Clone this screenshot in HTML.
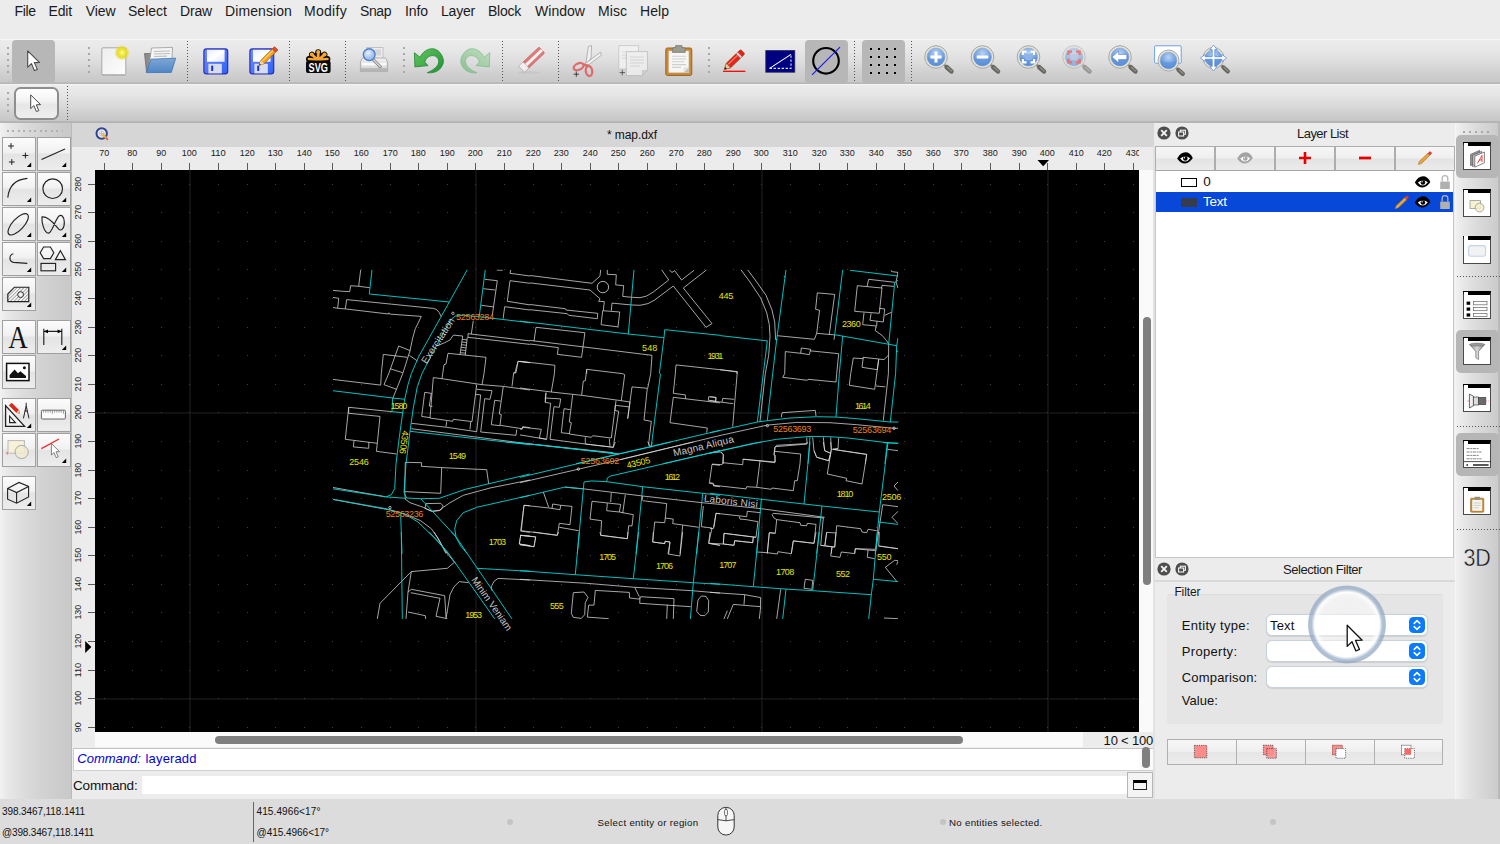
<!DOCTYPE html><html><head><meta charset="utf-8"><title>map.dxf</title><style>html,body{margin:0;padding:0;background:#ececec;}
body{width:1500px;height:844px;overflow:hidden;font-family:"Liberation Sans",sans-serif;}
#app{position:relative;width:1500px;height:844px;overflow:hidden;background:#ececec;}
#app *{box-sizing:border-box;}
.t{position:absolute;white-space:nowrap;}
.a{position:absolute;}
svg{position:absolute;overflow:visible;}
#menubar{position:absolute;left:0;top:0;width:1500px;height:39px;background:#ececec;}
#tb1{position:absolute;left:0;top:39px;width:1500px;height:45px;background:linear-gradient(#ececec 0,#e8e8e8 20%,#dddddd 50%,#d0d0d0 75%,#c8c8c8 95%,#b9b9b9 97%,#b6b6b6);border-top:1px solid #f6f6f6;}
#tb2{position:absolute;left:0;top:84px;width:1500px;height:39px;background:linear-gradient(#ececec 0,#e6e6e6 25%,#d9d9d9 55%,#cccccc 82%,#c7c7c7 94%,#b6b6b6 96%,#b2b2b2);border-top:1px solid #f4f4f4;}
#tbline{display:none}
.sel{position:absolute;background:#b7b7b7;border-radius:4px;}
.hv{position:absolute;width:2px;background:repeating-linear-gradient(#a8a8a8 0 2px,transparent 2px 6px);}
.hh{position:absolute;height:2px;background:repeating-linear-gradient(90deg,#a8a8a8 0 2px,transparent 2px 6px);}
.sv{position:absolute;width:1px;background:repeating-linear-gradient(#555 0 1px,transparent 1px 3px);}
.sh{position:absolute;height:1px;background:repeating-linear-gradient(90deg,#555 0 1px,transparent 1px 3px);}
.lb{position:absolute;width:34px;height:34px;border:1px solid #a0a0a0;background:linear-gradient(#fcfcfc,#f1f1f1 45%,#e4e4e4 52%,#ededed);}
</style></head><body><div id="app">
<div id="menubar"></div>
<span class="t" style="left:14.40px;top:3.00px;font-size:14px;line-height:17px;color:#1a1a1a;letter-spacing:-0.314px;">File</span>
<span class="t" style="left:48.50px;top:3.00px;font-size:14px;line-height:17px;color:#1a1a1a;letter-spacing:-0.131px;">Edit</span>
<span class="t" style="left:85.80px;top:3.00px;font-size:14px;line-height:17px;color:#1a1a1a;letter-spacing:-0.073px;">View</span>
<span class="t" style="left:128.00px;top:3.00px;font-size:14px;line-height:17px;color:#1a1a1a;letter-spacing:0.015px;">Select</span>
<span class="t" style="left:180.00px;top:3.00px;font-size:14px;line-height:17px;color:#1a1a1a;letter-spacing:-0.167px;">Draw</span>
<span class="t" style="left:225.00px;top:3.00px;font-size:14px;line-height:17px;color:#1a1a1a;letter-spacing:0.096px;">Dimension</span>
<span class="t" style="left:304.00px;top:3.00px;font-size:14px;line-height:17px;color:#1a1a1a;letter-spacing:0.295px;">Modify</span>
<span class="t" style="left:360.00px;top:3.00px;font-size:14px;line-height:17px;color:#1a1a1a;letter-spacing:-0.424px;">Snap</span>
<span class="t" style="left:405.00px;top:3.00px;font-size:14px;line-height:17px;color:#1a1a1a;letter-spacing:-0.087px;">Info</span>
<span class="t" style="left:441.00px;top:3.00px;font-size:14px;line-height:17px;color:#1a1a1a;letter-spacing:-0.203px;">Layer</span>
<span class="t" style="left:488.00px;top:3.00px;font-size:14px;line-height:17px;color:#1a1a1a;letter-spacing:-0.247px;">Block</span>
<span class="t" style="left:535.00px;top:3.00px;font-size:14px;line-height:17px;color:#1a1a1a;letter-spacing:0.035px;">Window</span>
<span class="t" style="left:598.00px;top:3.00px;font-size:14px;line-height:17px;color:#1a1a1a;letter-spacing:0.057px;">Misc</span>
<span class="t" style="left:640.00px;top:3.00px;font-size:14px;line-height:17px;color:#1a1a1a;letter-spacing:0.052px;">Help</span>
<div id="tb1"></div><div id="tb2"></div><div id="tbline"></div>
<div class="hv" style="left:7px;top:47px;height:26px"></div>
<div class="sel" style="left:12px;top:40px;width:43px;height:43px"></div>
<svg style="left:27px;top:50px" width="14" height="23" viewBox="0 0 14 23"><path d="M0.7 0.9 L0.7 17.2 L4.5 13.6 L7.4 20.6 L10.3 19.4 L7.4 12.6 L12.4 12.4 Z" fill="#fff" stroke="#4a4a4a" stroke-width="1.1" stroke-linejoin="round"/></svg>
<div class="hv" style="left:88px;top:47px;height:26px"></div>
<!-- new doc -->
<svg style="left:99px;top:44px" width="32" height="36" viewBox="0 0 32 36">
<defs><linearGradient id="gpaper" x1="0" y1="0" x2="1" y2="1"><stop offset="0" stop-color="#ededed"/><stop offset="1" stop-color="#fdfdfd"/></linearGradient>
<radialGradient id="gglow"><stop offset="0" stop-color="#fffde0"/><stop offset="0.22" stop-color="#f6ee4a"/><stop offset="0.62" stop-color="#e6d91c" stop-opacity="0.9"/><stop offset="1" stop-color="#e6d91c" stop-opacity="0"/></radialGradient></defs>
<rect x="2.6" y="29.6" width="24.4" height="2" rx="1" fill="#8a8a8a" opacity="0.6"/>
<rect x="2.8" y="3.8" width="24" height="27" rx="1.2" fill="url(#gpaper)" stroke="#a9a9a9" stroke-width="1"/>
<circle cx="23" cy="8.7" r="7.8" fill="url(#gglow)"/>
</svg>
<!-- open folder -->
<svg style="left:142px;top:44px" width="38" height="34" viewBox="0 0 38 34">
<defs><linearGradient id="gfold" x1="0" y1="0" x2="0" y2="1"><stop offset="0" stop-color="#7fa7d6"/><stop offset="1" stop-color="#4f86c6"/></linearGradient></defs>
<path d="M2.5 9.5 L12 9.5 L13 7.5 L28 7.5 L28 27.5 L4.5 27.5 Z" fill="#8c8c8c" stroke="#6d6d6d" stroke-width="0.8"/>
<path d="M9.5 4 L30.5 3.4 L29.5 24 L6.5 26 Z" fill="#f4f4f4" stroke="#9a9a9a" stroke-width="0.8"/>
<path d="M12 7.5 L28 7 M12 10 L28 9.5 M12 12.5 L25 12.2" stroke="#bdbdbd" stroke-width="1.2"/>
<path d="M9 15.2 L33.7 14.2 L29.3 28.4 L4.2 28.6 Z" fill="url(#gfold)" stroke="#3f73b2" stroke-width="0.8" stroke-linejoin="round"/>
</svg>
<div class="sv" style="left:187px;top:41px;height:40px"></div>
<!-- save -->
<svg style="left:203px;top:47.5px" width="26" height="27" viewBox="0 0 26 27">
<defs><linearGradient id="gsave" x1="0" y1="0" x2="1" y2="1"><stop offset="0" stop-color="#6f8cff"/><stop offset="1" stop-color="#2f62f2"/></linearGradient>
<linearGradient id="glabel" x1="0" y1="0" x2="1" y2="1"><stop offset="0" stop-color="#e8ecff"/><stop offset="0.5" stop-color="#ffffff"/><stop offset="1" stop-color="#dfe6ff"/></linearGradient></defs>
<rect x="0.9" y="0.9" width="23.8" height="25" rx="2.6" fill="url(#gsave)" stroke="#2a2fb5" stroke-width="1.2"/>
<rect x="4" y="1.8" width="17.6" height="12" fill="url(#glabel)"/>
<rect x="5.4" y="15.8" width="13.4" height="9.6" fill="#d9dcec"/>
<rect x="8.2" y="17.6" width="2" height="5.4" fill="#1536c9"/>
</svg>
<svg style="left:249px;top:47.5px" width="26" height="27" viewBox="0 0 26 27">
<rect x="0.9" y="0.9" width="23.8" height="25" rx="2.6" fill="url(#gsave)" stroke="#2a2fb5" stroke-width="1.2"/>
<rect x="4" y="1.8" width="17.6" height="12" fill="url(#glabel)"/>
<rect x="5.4" y="15.8" width="13.4" height="9.6" fill="#d9dcec"/>
<rect x="8.2" y="17.6" width="2" height="5.4" fill="#1536c9"/>
<g transform="translate(10.1,17.4) rotate(-45)"><path d="M0 0 L4.6 -2.3 L24 -2.3 L24 2.3 L4.6 2.3 Z" fill="#f2a31c" stroke="#a8590e" stroke-width="0.7"/><path d="M0 0 L4.6 -2.3 L4.6 2.3Z" fill="#f3d9a8"/><path d="M0 0 L1.8 -0.9 L1.8 0.9Z" fill="#222"/><rect x="20.6" y="-2.3" width="3.6" height="4.6" rx="0.8" fill="#e8433b" stroke="#a8590e" stroke-width="0.5"/><path d="M5.2 -0.7 L20.4 -0.7" stroke="#ffd56e" stroke-width="1.1"/></g>
</svg>
<div class="sv" style="left:289px;top:41px;height:40px"></div>
<!-- SVG icon -->
<svg style="left:305px;top:48px" width="27" height="26" viewBox="0 0 27 26">
<g stroke-linecap="round" fill="none"><g stroke="#0a0a0a" stroke-width="6"><path d="M13.2 12.4 L13.2 4.2 M13.2 12.4 L7 6.6 M13.2 12.4 L19.4 6.6 M13.2 12 L4 11 M13.2 12 L22.4 11"/></g>
<g stroke="#f8a630" stroke-width="2.7"><path d="M13.2 12.4 L13.2 4.2 M13.2 12.4 L7 6.6 M13.2 12.4 L19.4 6.6 M13.2 12 L4 11 M13.2 12 L22.4 11"/></g></g>
<circle cx="13.2" cy="4" r="2" fill="#f8a630"/><circle cx="6.8" cy="6.4" r="2" fill="#f8a630"/><circle cx="19.6" cy="6.4" r="2" fill="#f8a630"/>
<rect x="1" y="12.6" width="24.6" height="12.4" rx="2.6" fill="#0a0a0a"/>
<text x="13.3" y="23.6" text-anchor="middle" font-family="Liberation Sans, sans-serif" font-weight="bold" font-size="12.4" textLength="19.4" lengthAdjust="spacingAndGlyphs" fill="#fff">SVG</text>
</svg>
<div class="sv" style="left:345px;top:41px;height:40px"></div>
<!-- print preview -->
<svg style="left:358px;top:45px" width="32" height="30" viewBox="0 0 32 30">
<defs><linearGradient id="gprn" x1="0" y1="0" x2="0" y2="1"><stop offset="0" stop-color="#f2f2f2"/><stop offset="1" stop-color="#cfcfcf"/></linearGradient>
<radialGradient id="glens1" cx="0.4" cy="0.35"><stop offset="0" stop-color="#e8f0fb"/><stop offset="1" stop-color="#9fc0ea"/></radialGradient></defs>
<rect x="9" y="2.5" width="16" height="12" fill="#ececec" stroke="#b9b9b9" stroke-width="0.8"/>
<rect x="16" y="4.5" width="7" height="6" fill="#d5d5d5"/>
<path d="M4.5 13 L27.5 13 L29.6 17 L29.6 26.6 L2.4 26.6 L2.4 17 Z" fill="url(#gprn)" stroke="#a2a2a2" stroke-width="0.8"/>
<rect x="2.4" y="23.2" width="27.2" height="3.6" fill="#b5b5b5"/>
<rect x="4" y="18" width="24" height="2.4" fill="#fafafa"/>
<path d="M15.5 14.8 L22.2 21.6" stroke="#8d8d8d" stroke-width="3.2" stroke-linecap="round"/>
<path d="M15.5 14.8 L22.2 21.6" stroke="#d6d6d6" stroke-width="1.4" stroke-linecap="round"/>
<circle cx="11.2" cy="9.6" r="5.9" fill="url(#glens1)" stroke="#4f7fd0" stroke-width="1.4"/>
</svg>
<div class="hv" style="left:403px;top:47px;height:26px"></div>
<!-- undo -->
<svg style="left:413px;top:47px" width="32" height="28" viewBox="0 0 32 28">
<defs><linearGradient id="gundo" x1="0" y1="0" x2="1" y2="1"><stop offset="0" stop-color="#66c85e"/><stop offset="1" stop-color="#1f8f38"/></linearGradient>
<path id="undop" d="M1.4 5.7 L1.9 19.9 L15 18.6 L11.7 15 C13 11 15.7 9 19 8.6 C23 8.4 25.7 11 25.7 14.3 C25.7 19 21 23 14.3 25.7 C20 26.4 25 24.5 27.7 21 C30 18 30.8 15 30.3 12.7 C29.5 8 25.5 2 19.5 1.7 C14 1.6 9.5 5.5 7 10.3 Z"/><linearGradient id="gredo" x1="0" y1="0" x2="1" y2="1"><stop offset="0" stop-color="#a9d9a6"/><stop offset="1" stop-color="#5fb36e"/></linearGradient></defs>
<use href="#undop" fill="url(#gundo)" stroke="#1d8534" stroke-width="0.8" stroke-linejoin="round"/>
</svg>
<!-- redo -->
<svg style="left:459.5px;top:47px;opacity:0.62" width="32" height="28" viewBox="0 0 32 28">
<g transform="translate(31.2,0) scale(-1,1)"><use href="#undop" fill="url(#gredo)" stroke="#4fa862" stroke-width="0.8" stroke-linejoin="round"/></g>
</svg>
<div class="sv" style="left:502px;top:41px;height:40px"></div>
<!-- eraser -->
<svg style="left:516px;top:46px;opacity:0.8" width="30" height="30" viewBox="0 0 30 30">
<ellipse cx="13" cy="26.6" rx="11.5" ry="1.3" fill="#bdbdbd" opacity="0.6"/>
<g transform="translate(5.6,23.2) rotate(-43.5)"><rect x="0" y="-4.2" width="28" height="8.4" rx="1.2" fill="#df5f5f" stroke="#b94a4a" stroke-width="0.6"/><rect x="6" y="-1.4" width="22" height="3" fill="#f6f6f6"/><rect x="0" y="-4.2" width="6" height="8.4" rx="1" fill="#f6f6f6" stroke="#b8b8b8" stroke-width="0.6"/></g>
</svg>
<div class="sv" style="left:558px;top:41px;height:40px"></div>
<!-- scissors -->
<svg style="left:571px;top:44px" width="32" height="34" viewBox="0 0 32 34">
<path d="M14.6 22 L17.4 2.4 L20.6 1.6 L20 14 Z" fill="#f1f1f1" stroke="#9a9a9a" stroke-width="0.7"/>
<path d="M12.5 21 L29.6 8.2 L30.4 11.2 L18 20.4 Z" fill="#f1f1f1" stroke="#9a9a9a" stroke-width="0.7"/>
<ellipse cx="7.6" cy="22.6" rx="5.2" ry="3.2" transform="rotate(-24 7.6 22.6)" fill="none" stroke="#dd6d6d" stroke-width="2.3"/>
<ellipse cx="18" cy="27" rx="3.2" ry="5" transform="rotate(-8 18 27)" fill="none" stroke="#dd6d6d" stroke-width="2.3"/>
<path d="M12 20.4 L17.4 22" stroke="#dd6d6d" stroke-width="2.6"/>
<path d="M2.6 30.2 L8 30.2 M5.3 27.5 L5.3 32.9" stroke="#222" stroke-width="0.8"/>
</svg>
<!-- copy -->
<svg style="left:616px;top:43px;opacity:0.8" width="34" height="36" viewBox="0 0 34 36">
<path d="M2.8 2.6 L22.6 2.6 L22.6 26 L2.8 26 Z" fill="#f3f3f3" stroke="#bdbdbd" stroke-width="0.8"/>
<path d="M6 9 L19 9 M6 12 L19 12 M6 15 L19 15" stroke="#d4d4d4" stroke-width="1"/>
<path d="M10.4 8.6 L31.4 8.6 L31.4 27.6 L26.4 32.6 L10.4 32.6 Z" fill="#f1f1f1" stroke="#b4b4b4" stroke-width="0.8"/>
<path d="M26.4 32.6 L26.4 27.6 L31.4 27.6 Z" fill="#cfcfcf" stroke="#b4b4b4" stroke-width="0.6"/>
<path d="M14 14 L28 14 M14 17 L28 17 M14 20 L28 20 M14 23 L24 23" stroke="#d0d0d0" stroke-width="1"/>
<path d="M3.6 29.6 L9 29.6 M6.3 26.9 L6.3 32.3" stroke="#222" stroke-width="0.8"/>
</svg>
<!-- paste -->
<svg style="left:663px;top:43px" width="32" height="35" viewBox="0 0 32 35">
<rect x="2.8" y="5" width="26" height="27.4" rx="1.6" fill="#c98a35" stroke="#9a6422" stroke-width="1"/>
<path d="M5.8 8 L25.8 8 L25.8 29.6 L5.8 29.6 Z" fill="#f6f6f4" stroke="#d7d7d0" stroke-width="0.5"/>
<path d="M20.8 29.6 L25.8 24.6 L25.8 29.6 Z" fill="#bcbcbc"/><path d="M20.8 29.6 L20.8 24.6 L25.8 24.6 Z" fill="#dedede"/>
<path d="M9 13.2 L23 13.2 M9 16 L23 16 M9 18.8 L21 18.8 M9 21.6 L23 21.6 M9 24.4 L18 24.4" stroke="#cfcfcf" stroke-width="1.1"/>
<path d="M9.4 9.4 L9.4 6 Q9.4 4.6 10.8 4.6 L12.6 4.6 L12.6 2.6 L19 2.6 L19 4.6 L20.8 4.6 Q22.2 4.6 22.2 6 L22.2 9.4 Z" fill="#9b9b8f" stroke="#75756b" stroke-width="0.7"/>
</svg>
<div class="hv" style="left:708px;top:47px;height:26px"></div>
<!-- red pencil -->
<svg style="left:721px;top:47px" width="28" height="28" viewBox="0 0 28 28">
<path d="M2 24.3 L24.4 24.3" stroke="#f00" stroke-width="1.3"/>
<g transform="translate(3.4,22.4) rotate(-44)"><path d="M0 0 L5.6 -3.1 L24 -3.1 Q25.6 -3.1 25.6 -1.5 L25.6 1.5 Q25.6 3.1 24 3.1 L5.6 3.1 Z" fill="#e3241b" stroke="#8c3a12" stroke-width="0.7"/><path d="M0 0 L5.6 -3.1 L5.6 3.1Z" fill="#e7c79a" stroke="#8c6a3a" stroke-width="0.5"/><path d="M0 0 L2.2 -1.2 L2.2 1.2Z" fill="#111"/><rect x="19.4" y="-3.1" width="2" height="6.2" fill="#d9d9d9"/><path d="M6.4 -1 L19 -1" stroke="#ff7a66" stroke-width="1.2"/></g>
</svg>
<!-- blue rect -->
<svg style="left:765px;top:50px" width="31" height="23" viewBox="0 0 31 23">
<rect x="0.8" y="0.6" width="29" height="21.6" fill="#000082" stroke="#2a2a4a" stroke-width="0.8"/>
<path d="M4.6 18.4 L26 4.4" stroke="#fff" stroke-width="1.1"/>
<path d="M4.6 18.4 L26 18.4 L26 4.4" stroke="#dfe3ff" stroke-width="1.1" stroke-dasharray="2.4 1.6" fill="none"/>
</svg>
<div class="sel" style="left:805px;top:40px;width:43px;height:43px"></div>
<svg style="left:808px;top:44px" width="36" height="34" viewBox="0 0 36 34">
<circle cx="18" cy="16.8" r="12.8" fill="none" stroke="#000" stroke-width="2.1"/>
<path d="M4 30.8 L32 3.2" stroke="#1414ff" stroke-width="1.1"/>
</svg>
<div class="sv" style="left:854px;top:41px;height:40px"></div>
<div class="sel" style="left:862px;top:40px;width:43px;height:43px"></div>
<svg style="left:868px;top:46px" width="30" height="30" viewBox="0 0 30 30"><g fill="#000">
<rect x="2" y="2" width="2" height="2"/><rect x="10" y="2" width="2" height="2"/><rect x="18" y="2" width="2" height="2"/><rect x="26" y="2" width="2" height="2"/>
<rect x="2" y="10" width="2" height="2"/><rect x="10" y="10" width="2" height="2"/><rect x="18" y="10" width="2" height="2"/><rect x="26" y="10" width="2" height="2"/>
<rect x="2" y="18" width="2" height="2"/><rect x="10" y="18" width="2" height="2"/><rect x="18" y="18" width="2" height="2"/><rect x="26" y="18" width="2" height="2"/>
<rect x="2" y="26" width="2" height="2"/><rect x="10" y="26" width="2" height="2"/><rect x="18" y="26" width="2" height="2"/><rect x="26" y="26" width="2" height="2"/></g></svg>
<div class="sv" style="left:911px;top:41px;height:40px"></div>
<svg style="left:0;top:0" width="1500" height="90" viewBox="0 0 1500 90">
<defs>
<radialGradient id="glens" cx="0.5" cy="0.3" r="0.75"><stop offset="0" stop-color="#b9d3f4"/><stop offset="0.5" stop-color="#7aa6e3"/><stop offset="1" stop-color="#4d83d0"/></radialGradient>
<g id="mag"><path d="M7.6 7.2 L11 10.4" stroke="#8a8a84" stroke-width="2.6"/><path d="M10.8 10.2 L15.4 14.4" stroke="#66665f" stroke-width="4.6" stroke-linecap="round"/><path d="M11.4 10.2 L15.6 14" stroke="#8f8f88" stroke-width="1.4" stroke-linecap="round"/><circle cx="0" cy="0" r="11.3" fill="#e4e4dc" stroke="#a6a69c" stroke-width="1"/><circle cx="0" cy="0" r="9" fill="url(#glens)" stroke="#8fa8c8" stroke-width="0.6"/><path d="M-8.6 0.5 A8.6 8.6 0 0 0 8.6 0.5 Q0 3.4 -8.6 0.5Z" fill="#5b8fd8" opacity="0.55"/></g>
</defs>
<g transform="translate(936,57)"><use href="#mag"/><path d="M-5.6 0 L5.6 0 M0 -5.6 L0 5.6" stroke="#fff" stroke-width="3"/></g>
<g transform="translate(982.5,57)"><use href="#mag"/><path d="M-5.8 0 L5.8 0" stroke="#fff" stroke-width="3"/></g>
<g transform="translate(1028.5,57)"><use href="#mag"/><rect x="-3.2" y="-3" width="6.4" height="6" fill="#8fb4ea"/><path d="M-5.6 -2 L-5.6 -5.4 L-2 -5.4 M2 -5.4 L5.6 -5.4 L5.6 -2 M5.6 2 L5.6 5.4 L2 5.4 M-2 5.4 L-5.6 5.4 L-5.6 2" stroke="#fff" stroke-width="2.2" fill="none"/></g>
<g transform="translate(1074,57)" opacity="0.55"><use href="#mag"/><rect x="-3.2" y="-3" width="6.4" height="6" fill="#9fb8e0"/><path d="M-5.6 -2 L-5.6 -5.4 L-2 -5.4 M2 -5.4 L5.6 -5.4 L5.6 -2 M5.6 2 L5.6 5.4 L2 5.4 M-2 5.4 L-5.6 5.4 L-5.6 2" stroke="#f02020" stroke-width="2.4" fill="none"/></g>
<g transform="translate(1120,57)"><use href="#mag"/><path d="M-8 0 L-1.4 -5.8 L-1.4 -2.6 L6.8 -2.6 L6.8 2.6 L-1.4 2.6 L-1.4 5.8 Z" fill="#fff" stroke="#3f6fb8" stroke-width="0.5"/></g>
<g><rect x="1154.6" y="45.8" width="26.6" height="17.4" rx="1" fill="#fff" stroke="#6f9fe0" stroke-width="1"/><g transform="translate(1168.5,60.5)"><use href="#mag" transform="scale(0.93)"/></g></g>
<g transform="translate(1213.5,58)"><use href="#mag" transform="scale(0.93)"/><path d="M0 -13 L3.6 -8.4 L1.3 -8.4 L1.3 -1.3 L8.4 -1.3 L8.4 -3.6 L13 0 L8.4 3.6 L8.4 1.3 L1.3 1.3 L1.3 8.4 L3.6 8.4 L0 13 L-3.6 8.4 L-1.3 8.4 L-1.3 1.3 L-8.4 1.3 L-8.4 3.6 L-13 0 L-8.4 -3.6 L-8.4 -1.3 L-1.3 -1.3 L-1.3 -8.4 L-3.6 -8.4 Z" fill="#fff" stroke="#4d83d0" stroke-width="0.7"/></g>
</svg>

<div class="hv" style="left:7px;top:92px;height:20px"></div>
<div class="a" style="left:14px;top:87px;width:45px;height:33px;border:2px solid #8e8e8e;border-radius:6.5px;background:linear-gradient(#ffffff,#f3f3f3 40%,#e6e6e6 55%,#efefef)"></div>
<svg style="left:30px;top:94px" width="12" height="20" viewBox="0 0 12 20"><path d="M0.7 0.9 L0.7 14.6 L3.9 11.6 L6.4 17.6 L8.8 16.6 L6.3 10.8 L10.6 10.6 Z" fill="#fff" stroke="#4a4a4a" stroke-width="1" stroke-linejoin="round"/></svg>
<div class="sv" style="left:67px;top:86px;height:35px"></div>

<div class="a" style="left:0;top:123px;width:72px;height:676px;background:linear-gradient(90deg,#f2f2f2 0,#e7e7e7 12%,#dbdbdb 35%,#d2d2d2 60%,#c9c9c9 96%);border-right:1.5px solid #bababa"></div><div class="hh" style="left:7px;top:130px;width:56px;background:repeating-linear-gradient(90deg,#b0b0b0 0 2px,transparent 2px 5.45px)"></div><div class="lb" style="left:1.5px;top:137px"></div><div class="lb" style="left:36.5px;top:137px"></div><div class="lb" style="left:1.5px;top:172px"></div><div class="lb" style="left:36.5px;top:172px"></div><div class="lb" style="left:1.5px;top:207px"></div><div class="lb" style="left:36.5px;top:207px"></div><div class="lb" style="left:1.5px;top:242px"></div><div class="lb" style="left:36.5px;top:242px"></div><div class="lb" style="left:1.5px;top:277px"></div><div class="lb" style="left:1.5px;top:320px"></div><div class="lb" style="left:36.5px;top:320px"></div><div class="lb" style="left:1.5px;top:355px"></div><div class="lb" style="left:1.5px;top:398px"></div><div class="lb" style="left:36.5px;top:398px"></div><div class="lb" style="left:1.5px;top:433px"></div><div class="lb" style="left:36.5px;top:433px"></div><div class="lb" style="left:1.5px;top:476px"></div><svg style="left:0;top:0" width="72" height="520" viewBox="0 0 72 520"><g fill="none" stroke="#222" stroke-width="1.15"><path d="M31.2 162.6 L31.2 167 L26.8 167 Z" fill="#000" stroke="none"/><path d="M66.2 162.6 L66.2 167 L61.8 167 Z" fill="#000" stroke="none"/><path d="M31.2 197.6 L31.2 202 L26.8 202 Z" fill="#000" stroke="none"/><path d="M66.2 197.6 L66.2 202 L61.8 202 Z" fill="#000" stroke="none"/><path d="M31.2 232.6 L31.2 237 L26.8 237 Z" fill="#000" stroke="none"/><path d="M66.2 232.6 L66.2 237 L61.8 237 Z" fill="#000" stroke="none"/><path d="M31.2 267.6 L31.2 272 L26.8 272 Z" fill="#000" stroke="none"/><path d="M66.2 267.6 L66.2 272 L61.8 272 Z" fill="#000" stroke="none"/><path d="M31.2 302.6 L31.2 307 L26.8 307 Z" fill="#000" stroke="none"/><path d="M66.2 345.6 L66.2 350 L61.8 350 Z" fill="#000" stroke="none"/><path d="M31.2 423.6 L31.2 428 L26.8 428 Z" fill="#000" stroke="none"/><path d="M66.2 458.6 L66.2 463 L61.8 463 Z" fill="#000" stroke="none"/><path d="M31.2 501.6 L31.2 506 L26.8 506 Z" fill="#000" stroke="none"/><path d="M8.1 146 L13.9 146 M11 143.1 L11 148.9" stroke-width="1"/><path d="M22.5 155.5 L28.3 155.5 M25.4 152.6 L25.4 158.4" stroke-width="1"/><path d="M8.9 162 L14.7 162 M11.8 159.1 L11.8 164.9" stroke-width="1"/><path d="M41.5 159.6 L65 149"/><path d="M7.8 197.6 Q9.5 180 27.4 178.4"/><circle cx="52.7" cy="188.7" r="9.8"/><ellipse cx="18.2" cy="224.3" rx="13.6" ry="5.6" transform="rotate(-47 18.2 224.3)"/><path d="M42 216.9 C41.5 222 44 233 48.5 233.1 C52 233 54 222 58.9 216.2 C61 214 64 216 64.3 222 C64.6 229 61 231 59 229.4 C56 227 50 216 42 216.9 Z"/><path d="M13.4 253.8 A4.4 4.4 0 0 0 13.4 262.4 L27.3 263.4"/><path d="M40.2 252.8 L43.6 247 L50.4 247 L53.8 252.8 L50.4 258.6 L43.6 258.6 Z"/><path d="M55.4 259.6 L60.4 250.6 L65.4 259.6 Z"/><rect x="41" y="263.4" width="14.6" height="7.4"/><defs><pattern id="hat" width="2.5" height="2.5" patternUnits="userSpaceOnUse" patternTransform="rotate(45)"><rect width="0.6" height="2.5" fill="#777" stroke="none"/></pattern></defs><path d="M7.8 301.6 L7.8 294 L14.4 287.2 L28.8 287.2 L28.8 301.6 Z" fill="#f4f4f4" stroke="none"/><path d="M7.8 301.6 L7.8 294 L14.4 287.2 L28.8 287.2 L28.8 301.6 Z" fill="url(#hat)"/><circle cx="20.6" cy="294.6" r="2.9" fill="#f2f2f2" stroke-width="1"/><path d="M43.8 328.8 L43.8 345 M61.8 328.8 L61.8 345 M43.8 331.4 L61.8 331.4"/><path d="M43.8 331.4 L48 329.6 L48 333.2Z M61.8 331.4 L57.6 329.6 L57.6 333.2Z" fill="#000" stroke="none"/><rect x="6.6" y="363.4" width="22.4" height="17.2" fill="#fff" stroke="#111" stroke-width="1.5"/><path d="M9.6 378 L9.6 375 L14.6 369.6 L18 373.2 L20.4 371.2 L26 376 L26 378 Z" fill="#111" stroke="none"/><circle cx="24.4" cy="367.8" r="1.5" fill="#111" stroke="none"/><path d="M5.6 405.6 L5.6 426.4 L24.6 426.4 Z" fill="#f4f4f4" stroke-width="1.3"/><path d="M9.6 416.2 L9.6 422.6 L15.4 422.6 Z" fill="#fff"/><g transform="translate(19.6,413.4) rotate(-135)"><path d="M0 0 L3 -1.7 L13 -1.7 L13 1.7 L3 1.7 Z" fill="#e3241b" stroke="#8c3a12" stroke-width="0.5"/><path d="M0 0 L3 -1.7 L3 1.7Z" fill="#e7c79a" stroke="none"/></g><path d="M26.2 402.8 L26.2 406 L23.4 418.4 M26.2 406 L29 418.4 M24.6 411 L27.8 411" stroke-width="1"/><rect x="41.4" y="410.2" width="24" height="8.8" rx="1" fill="#fbfbfb" stroke="#555" stroke-width="0.9"/><path d="M43.6 410.6 L43.6 412.6" stroke="#555" stroke-width="0.6"/><path d="M45.8 410.6 L45.8 412.6" stroke="#555" stroke-width="0.6"/><path d="M48 410.6 L48 412.6" stroke="#555" stroke-width="0.6"/><path d="M50.2 410.6 L50.2 412.6" stroke="#555" stroke-width="0.6"/><path d="M52.4 410.6 L52.4 413.8" stroke="#555" stroke-width="0.6"/><path d="M54.6 410.6 L54.6 412.6" stroke="#555" stroke-width="0.6"/><path d="M56.8 410.6 L56.8 412.6" stroke="#555" stroke-width="0.6"/><path d="M59 410.6 L59 412.6" stroke="#555" stroke-width="0.6"/><path d="M61.2 410.6 L61.2 412.6" stroke="#555" stroke-width="0.6"/><path d="M63.4 410.6 L63.4 413.8" stroke="#555" stroke-width="0.6"/><rect x="8" y="440.6" width="16.4" height="12.6" fill="#f6f1d8" stroke="#b9b9b9" stroke-width="1"/><circle cx="21.6" cy="452" r="6.6" fill="#f1ecd0" fill-opacity="0.8" stroke="#a9a9a9" stroke-width="1"/><path d="M6.4 453.2 L8 453.2" stroke="#f08080" stroke-width="2.4"/><path d="M41.4 448.6 L59 439" stroke="#f02a2a" stroke-width="1.3"/><path d="M51.4 443.4 L51.4 455 L54 452.6 L56.2 457.6 L58.2 456.8 L56 451.8 L59.4 451.6 Z" fill="#fff" stroke="#666" stroke-width="0.8"/><path d="M7.6 488.6 L19 482.4 L28.6 486.4 L28.6 497 L16.6 503.2 L7.6 499.2 Z M7.6 488.6 L16.6 492.6 L28.6 486.4 M16.6 492.6 L16.6 503.2" stroke-width="1.1"/></g><text x="18" y="347.6" text-anchor="middle" font-family="Liberation Serif, serif" font-size="30.5" textLength="19.5" lengthAdjust="spacingAndGlyphs" fill="#111" stroke="none">A</text></svg>
<div class="a" style="left:72px;top:123px;width:1082px;height:24px;background:#d6d6d6"></div><span class="t" style="left:607.00px;top:128.00px;font-size:12px;line-height:14px;color:#111;letter-spacing:-0.076px;">* map.dxf</span><svg style="left:95px;top:127px" width="15" height="15" viewBox="0 0 15 15"><circle cx="6.7" cy="6.5" r="5.2" fill="#eef1f8" stroke="#2f4590" stroke-width="2"/><path d="M3.6 6.5 L9.8 6.5 M6.7 3.4 L6.7 9.6" stroke="#c9a0a8" stroke-width="0.7"/><circle cx="6.7" cy="6.5" r="2.4" fill="none" stroke="#b7b9cc" stroke-width="0.7"/><path d="M7.6 7.4 L11.6 11.4" stroke="#f0b020" stroke-width="2.2" stroke-linecap="round"/><path d="M11.4 11.2 L12.4 12.2" stroke="#e07070" stroke-width="2.2" stroke-linecap="round"/><path d="M6.8 6.6 L8.6 7.2 L7.4 8.4Z" fill="#e8d0a0"/></svg><div class="a" style="left:72px;top:147px;width:1082px;height:23px;background:#ececec"></div><div class="a" style="left:72px;top:170px;width:23px;height:579px;background:#ececec"></div><div class="a" style="left:95px;top:170px;width:1044px;height:562px;background:#000"></div><div class="a" style="left:1139px;top:170px;width:14px;height:562px;background:#fafafa"></div><div class="a" style="left:95px;top:732px;width:988px;height:14.5px;background:#fafafa"></div><div class="a" style="left:1153px;top:147px;width:2px;height:652px;background:#e2e2e2"></div><div class="a" style="left:215px;top:736px;width:748px;height:8px;border-radius:4px;background:#7f7f7f"></div><div class="a" style="left:1143px;top:317px;width:8px;height:268px;border-radius:4px;background:#7f7f7f"></div><span class="t" style="left:1103.60px;top:732.50px;font-size:13px;line-height:16px;color:#111;letter-spacing:-0.183px;">10 &lt; 100</span><svg style="left:0;top:0" width="1160" height="760" viewBox="0 0 1160 760"><defs><clipPath id="rc"><rect x="72" y="146" width="1067" height="586"/></clipPath></defs><g clip-path="url(#rc)" font-family="Liberation Sans, sans-serif" font-size="9.5" fill="#1a1a1a"><rect x="104.0" y="163" width="1" height="7" fill="#5a5a5a"/><text x="104.2" y="156" text-anchor="middle" textLength="10" lengthAdjust="spacingAndGlyphs">70</text><rect x="132.0" y="163" width="1" height="7" fill="#5a5a5a"/><text x="132.2" y="156" text-anchor="middle" textLength="10" lengthAdjust="spacingAndGlyphs">80</text><rect x="161.0" y="163" width="1" height="7" fill="#5a5a5a"/><text x="161.2" y="156" text-anchor="middle" textLength="10" lengthAdjust="spacingAndGlyphs">90</text><rect x="189.0" y="163" width="1" height="7" fill="#5a5a5a"/><text x="189.2" y="156" text-anchor="middle" textLength="15" lengthAdjust="spacingAndGlyphs">100</text><rect x="218.0" y="163" width="1" height="7" fill="#5a5a5a"/><text x="218.2" y="156" text-anchor="middle" textLength="15" lengthAdjust="spacingAndGlyphs">110</text><rect x="247.0" y="163" width="1" height="7" fill="#5a5a5a"/><text x="247.2" y="156" text-anchor="middle" textLength="15" lengthAdjust="spacingAndGlyphs">120</text><rect x="275.0" y="163" width="1" height="7" fill="#5a5a5a"/><text x="275.2" y="156" text-anchor="middle" textLength="15" lengthAdjust="spacingAndGlyphs">130</text><rect x="304.0" y="163" width="1" height="7" fill="#5a5a5a"/><text x="304.2" y="156" text-anchor="middle" textLength="15" lengthAdjust="spacingAndGlyphs">140</text><rect x="332.0" y="163" width="1" height="7" fill="#5a5a5a"/><text x="332.2" y="156" text-anchor="middle" textLength="15" lengthAdjust="spacingAndGlyphs">150</text><rect x="361.0" y="163" width="1" height="7" fill="#5a5a5a"/><text x="361.2" y="156" text-anchor="middle" textLength="15" lengthAdjust="spacingAndGlyphs">160</text><rect x="390.0" y="163" width="1" height="7" fill="#5a5a5a"/><text x="390.2" y="156" text-anchor="middle" textLength="15" lengthAdjust="spacingAndGlyphs">170</text><rect x="418.0" y="163" width="1" height="7" fill="#5a5a5a"/><text x="418.2" y="156" text-anchor="middle" textLength="15" lengthAdjust="spacingAndGlyphs">180</text><rect x="447.0" y="163" width="1" height="7" fill="#5a5a5a"/><text x="447.2" y="156" text-anchor="middle" textLength="15" lengthAdjust="spacingAndGlyphs">190</text><rect x="475.0" y="163" width="1" height="7" fill="#5a5a5a"/><text x="475.2" y="156" text-anchor="middle" textLength="15" lengthAdjust="spacingAndGlyphs">200</text><rect x="504.0" y="163" width="1" height="7" fill="#5a5a5a"/><text x="504.2" y="156" text-anchor="middle" textLength="15" lengthAdjust="spacingAndGlyphs">210</text><rect x="533.0" y="163" width="1" height="7" fill="#5a5a5a"/><text x="533.2" y="156" text-anchor="middle" textLength="15" lengthAdjust="spacingAndGlyphs">220</text><rect x="561.0" y="163" width="1" height="7" fill="#5a5a5a"/><text x="561.2" y="156" text-anchor="middle" textLength="15" lengthAdjust="spacingAndGlyphs">230</text><rect x="590.0" y="163" width="1" height="7" fill="#5a5a5a"/><text x="590.2" y="156" text-anchor="middle" textLength="15" lengthAdjust="spacingAndGlyphs">240</text><rect x="618.0" y="163" width="1" height="7" fill="#5a5a5a"/><text x="618.2" y="156" text-anchor="middle" textLength="15" lengthAdjust="spacingAndGlyphs">250</text><rect x="647.0" y="163" width="1" height="7" fill="#5a5a5a"/><text x="647.2" y="156" text-anchor="middle" textLength="15" lengthAdjust="spacingAndGlyphs">260</text><rect x="676.0" y="163" width="1" height="7" fill="#5a5a5a"/><text x="676.2" y="156" text-anchor="middle" textLength="15" lengthAdjust="spacingAndGlyphs">270</text><rect x="704.0" y="163" width="1" height="7" fill="#5a5a5a"/><text x="704.2" y="156" text-anchor="middle" textLength="15" lengthAdjust="spacingAndGlyphs">280</text><rect x="733.0" y="163" width="1" height="7" fill="#5a5a5a"/><text x="733.2" y="156" text-anchor="middle" textLength="15" lengthAdjust="spacingAndGlyphs">290</text><rect x="761.0" y="163" width="1" height="7" fill="#5a5a5a"/><text x="761.2" y="156" text-anchor="middle" textLength="15" lengthAdjust="spacingAndGlyphs">300</text><rect x="790.0" y="163" width="1" height="7" fill="#5a5a5a"/><text x="790.2" y="156" text-anchor="middle" textLength="15" lengthAdjust="spacingAndGlyphs">310</text><rect x="819.0" y="163" width="1" height="7" fill="#5a5a5a"/><text x="819.2" y="156" text-anchor="middle" textLength="15" lengthAdjust="spacingAndGlyphs">320</text><rect x="847.0" y="163" width="1" height="7" fill="#5a5a5a"/><text x="847.2" y="156" text-anchor="middle" textLength="15" lengthAdjust="spacingAndGlyphs">330</text><rect x="876.0" y="163" width="1" height="7" fill="#5a5a5a"/><text x="876.2" y="156" text-anchor="middle" textLength="15" lengthAdjust="spacingAndGlyphs">340</text><rect x="904.0" y="163" width="1" height="7" fill="#5a5a5a"/><text x="904.2" y="156" text-anchor="middle" textLength="15" lengthAdjust="spacingAndGlyphs">350</text><rect x="933.0" y="163" width="1" height="7" fill="#5a5a5a"/><text x="933.2" y="156" text-anchor="middle" textLength="15" lengthAdjust="spacingAndGlyphs">360</text><rect x="961.0" y="163" width="1" height="7" fill="#5a5a5a"/><text x="961.2" y="156" text-anchor="middle" textLength="15" lengthAdjust="spacingAndGlyphs">370</text><rect x="990.0" y="163" width="1" height="7" fill="#5a5a5a"/><text x="990.2" y="156" text-anchor="middle" textLength="15" lengthAdjust="spacingAndGlyphs">380</text><rect x="1019.0" y="163" width="1" height="7" fill="#5a5a5a"/><text x="1019.2" y="156" text-anchor="middle" textLength="15" lengthAdjust="spacingAndGlyphs">390</text><rect x="1047.0" y="163" width="1" height="7" fill="#5a5a5a"/><text x="1047.2" y="156" text-anchor="middle" textLength="15" lengthAdjust="spacingAndGlyphs">400</text><rect x="1076.0" y="163" width="1" height="7" fill="#5a5a5a"/><text x="1076.2" y="156" text-anchor="middle" textLength="15" lengthAdjust="spacingAndGlyphs">410</text><rect x="1104.0" y="163" width="1" height="7" fill="#5a5a5a"/><text x="1104.2" y="156" text-anchor="middle" textLength="15" lengthAdjust="spacingAndGlyphs">420</text><rect x="1133.0" y="163" width="1" height="7" fill="#5a5a5a"/><text x="1133.2" y="156" text-anchor="middle" textLength="15" lengthAdjust="spacingAndGlyphs">430</text><rect x="88" y="727.0" width="7" height="1" fill="#5a5a5a"/><text transform="translate(80.8,727.2) rotate(-90)" text-anchor="middle" textLength="10" lengthAdjust="spacingAndGlyphs">90</text><rect x="88" y="698.0" width="7" height="1" fill="#5a5a5a"/><text transform="translate(80.8,698.2) rotate(-90)" text-anchor="middle" textLength="14.8" lengthAdjust="spacingAndGlyphs">100</text><rect x="88" y="670.0" width="7" height="1" fill="#5a5a5a"/><text transform="translate(80.8,670.2) rotate(-90)" text-anchor="middle" textLength="14.8" lengthAdjust="spacingAndGlyphs">110</text><rect x="88" y="641.0" width="7" height="1" fill="#5a5a5a"/><text transform="translate(80.8,641.2) rotate(-90)" text-anchor="middle" textLength="14.8" lengthAdjust="spacingAndGlyphs">120</text><rect x="88" y="612.0" width="7" height="1" fill="#5a5a5a"/><text transform="translate(80.8,612.2) rotate(-90)" text-anchor="middle" textLength="14.8" lengthAdjust="spacingAndGlyphs">130</text><rect x="88" y="584.0" width="7" height="1" fill="#5a5a5a"/><text transform="translate(80.8,584.2) rotate(-90)" text-anchor="middle" textLength="14.8" lengthAdjust="spacingAndGlyphs">140</text><rect x="88" y="555.0" width="7" height="1" fill="#5a5a5a"/><text transform="translate(80.8,555.2) rotate(-90)" text-anchor="middle" textLength="14.8" lengthAdjust="spacingAndGlyphs">150</text><rect x="88" y="527.0" width="7" height="1" fill="#5a5a5a"/><text transform="translate(80.8,527.2) rotate(-90)" text-anchor="middle" textLength="14.8" lengthAdjust="spacingAndGlyphs">160</text><rect x="88" y="498.0" width="7" height="1" fill="#5a5a5a"/><text transform="translate(80.8,498.2) rotate(-90)" text-anchor="middle" textLength="14.8" lengthAdjust="spacingAndGlyphs">170</text><rect x="88" y="470.0" width="7" height="1" fill="#5a5a5a"/><text transform="translate(80.8,470.2) rotate(-90)" text-anchor="middle" textLength="14.8" lengthAdjust="spacingAndGlyphs">180</text><rect x="88" y="441.0" width="7" height="1" fill="#5a5a5a"/><text transform="translate(80.8,441.2) rotate(-90)" text-anchor="middle" textLength="14.8" lengthAdjust="spacingAndGlyphs">190</text><rect x="88" y="412.0" width="7" height="1" fill="#5a5a5a"/><text transform="translate(80.8,412.2) rotate(-90)" text-anchor="middle" textLength="14.8" lengthAdjust="spacingAndGlyphs">200</text><rect x="88" y="384.0" width="7" height="1" fill="#5a5a5a"/><text transform="translate(80.8,384.2) rotate(-90)" text-anchor="middle" textLength="14.8" lengthAdjust="spacingAndGlyphs">210</text><rect x="88" y="355.0" width="7" height="1" fill="#5a5a5a"/><text transform="translate(80.8,355.2) rotate(-90)" text-anchor="middle" textLength="14.8" lengthAdjust="spacingAndGlyphs">220</text><rect x="88" y="327.0" width="7" height="1" fill="#5a5a5a"/><text transform="translate(80.8,327.2) rotate(-90)" text-anchor="middle" textLength="14.8" lengthAdjust="spacingAndGlyphs">230</text><rect x="88" y="298.0" width="7" height="1" fill="#5a5a5a"/><text transform="translate(80.8,298.2) rotate(-90)" text-anchor="middle" textLength="14.8" lengthAdjust="spacingAndGlyphs">240</text><rect x="88" y="269.0" width="7" height="1" fill="#5a5a5a"/><text transform="translate(80.8,269.2) rotate(-90)" text-anchor="middle" textLength="14.8" lengthAdjust="spacingAndGlyphs">250</text><rect x="88" y="241.0" width="7" height="1" fill="#5a5a5a"/><text transform="translate(80.8,241.2) rotate(-90)" text-anchor="middle" textLength="14.8" lengthAdjust="spacingAndGlyphs">260</text><rect x="88" y="212.0" width="7" height="1" fill="#5a5a5a"/><text transform="translate(80.8,212.2) rotate(-90)" text-anchor="middle" textLength="14.8" lengthAdjust="spacingAndGlyphs">270</text><rect x="88" y="184.0" width="7" height="1" fill="#5a5a5a"/><text transform="translate(80.8,184.2) rotate(-90)" text-anchor="middle" textLength="14.8" lengthAdjust="spacingAndGlyphs">280</text><path d="M1037.5 160 L1049 160 L1043.2 166.2 Z" fill="#000"/><path d="M85.2 641 L85.2 653 L91.4 647 Z" fill="#000"/></g><g fill="#111111"><rect x="189" y="170" width="2" height="562"/><rect x="475" y="170" width="2" height="562"/><rect x="761" y="170" width="2" height="562"/><rect x="1047" y="170" width="2" height="562"/><rect x="95" y="698" width="1044" height="2"/><rect x="95" y="412" width="1044" height="2"/></g><path fill="#3e3e3e" d="M104 727h1v1h-1zM104 698h1v1h-1zM104 670h1v1h-1zM104 641h1v1h-1zM104 612h1v1h-1zM104 584h1v1h-1zM104 555h1v1h-1zM104 527h1v1h-1zM104 498h1v1h-1zM104 470h1v1h-1zM104 441h1v1h-1zM104 412h1v1h-1zM104 384h1v1h-1zM104 355h1v1h-1zM104 327h1v1h-1zM104 298h1v1h-1zM104 269h1v1h-1zM104 241h1v1h-1zM104 212h1v1h-1zM104 184h1v1h-1zM132 727h1v1h-1zM132 698h1v1h-1zM132 670h1v1h-1zM132 641h1v1h-1zM132 612h1v1h-1zM132 584h1v1h-1zM132 555h1v1h-1zM132 527h1v1h-1zM132 498h1v1h-1zM132 470h1v1h-1zM132 441h1v1h-1zM132 412h1v1h-1zM132 384h1v1h-1zM132 355h1v1h-1zM132 327h1v1h-1zM132 298h1v1h-1zM132 269h1v1h-1zM132 241h1v1h-1zM132 212h1v1h-1zM132 184h1v1h-1zM161 727h1v1h-1zM161 698h1v1h-1zM161 670h1v1h-1zM161 641h1v1h-1zM161 612h1v1h-1zM161 584h1v1h-1zM161 555h1v1h-1zM161 527h1v1h-1zM161 498h1v1h-1zM161 470h1v1h-1zM161 441h1v1h-1zM161 412h1v1h-1zM161 384h1v1h-1zM161 355h1v1h-1zM161 327h1v1h-1zM161 298h1v1h-1zM161 269h1v1h-1zM161 241h1v1h-1zM161 212h1v1h-1zM161 184h1v1h-1zM189 727h1v1h-1zM189 698h1v1h-1zM189 670h1v1h-1zM189 641h1v1h-1zM189 612h1v1h-1zM189 584h1v1h-1zM189 555h1v1h-1zM189 527h1v1h-1zM189 498h1v1h-1zM189 470h1v1h-1zM189 441h1v1h-1zM189 412h1v1h-1zM189 384h1v1h-1zM189 355h1v1h-1zM189 327h1v1h-1zM189 298h1v1h-1zM189 269h1v1h-1zM189 241h1v1h-1zM189 212h1v1h-1zM189 184h1v1h-1zM218 727h1v1h-1zM218 698h1v1h-1zM218 670h1v1h-1zM218 641h1v1h-1zM218 612h1v1h-1zM218 584h1v1h-1zM218 555h1v1h-1zM218 527h1v1h-1zM218 498h1v1h-1zM218 470h1v1h-1zM218 441h1v1h-1zM218 412h1v1h-1zM218 384h1v1h-1zM218 355h1v1h-1zM218 327h1v1h-1zM218 298h1v1h-1zM218 269h1v1h-1zM218 241h1v1h-1zM218 212h1v1h-1zM218 184h1v1h-1zM247 727h1v1h-1zM247 698h1v1h-1zM247 670h1v1h-1zM247 641h1v1h-1zM247 612h1v1h-1zM247 584h1v1h-1zM247 555h1v1h-1zM247 527h1v1h-1zM247 498h1v1h-1zM247 470h1v1h-1zM247 441h1v1h-1zM247 412h1v1h-1zM247 384h1v1h-1zM247 355h1v1h-1zM247 327h1v1h-1zM247 298h1v1h-1zM247 269h1v1h-1zM247 241h1v1h-1zM247 212h1v1h-1zM247 184h1v1h-1zM275 727h1v1h-1zM275 698h1v1h-1zM275 670h1v1h-1zM275 641h1v1h-1zM275 612h1v1h-1zM275 584h1v1h-1zM275 555h1v1h-1zM275 527h1v1h-1zM275 498h1v1h-1zM275 470h1v1h-1zM275 441h1v1h-1zM275 412h1v1h-1zM275 384h1v1h-1zM275 355h1v1h-1zM275 327h1v1h-1zM275 298h1v1h-1zM275 269h1v1h-1zM275 241h1v1h-1zM275 212h1v1h-1zM275 184h1v1h-1zM304 727h1v1h-1zM304 698h1v1h-1zM304 670h1v1h-1zM304 641h1v1h-1zM304 612h1v1h-1zM304 584h1v1h-1zM304 555h1v1h-1zM304 527h1v1h-1zM304 498h1v1h-1zM304 470h1v1h-1zM304 441h1v1h-1zM304 412h1v1h-1zM304 384h1v1h-1zM304 355h1v1h-1zM304 327h1v1h-1zM304 298h1v1h-1zM304 269h1v1h-1zM304 241h1v1h-1zM304 212h1v1h-1zM304 184h1v1h-1zM332 727h1v1h-1zM332 698h1v1h-1zM332 670h1v1h-1zM332 641h1v1h-1zM332 612h1v1h-1zM332 584h1v1h-1zM332 555h1v1h-1zM332 527h1v1h-1zM332 498h1v1h-1zM332 470h1v1h-1zM332 441h1v1h-1zM332 412h1v1h-1zM332 384h1v1h-1zM332 355h1v1h-1zM332 327h1v1h-1zM332 298h1v1h-1zM332 269h1v1h-1zM332 241h1v1h-1zM332 212h1v1h-1zM332 184h1v1h-1zM361 727h1v1h-1zM361 698h1v1h-1zM361 670h1v1h-1zM361 641h1v1h-1zM361 612h1v1h-1zM361 584h1v1h-1zM361 555h1v1h-1zM361 527h1v1h-1zM361 498h1v1h-1zM361 470h1v1h-1zM361 441h1v1h-1zM361 412h1v1h-1zM361 384h1v1h-1zM361 355h1v1h-1zM361 327h1v1h-1zM361 298h1v1h-1zM361 269h1v1h-1zM361 241h1v1h-1zM361 212h1v1h-1zM361 184h1v1h-1zM390 727h1v1h-1zM390 698h1v1h-1zM390 670h1v1h-1zM390 641h1v1h-1zM390 612h1v1h-1zM390 584h1v1h-1zM390 555h1v1h-1zM390 527h1v1h-1zM390 498h1v1h-1zM390 470h1v1h-1zM390 441h1v1h-1zM390 412h1v1h-1zM390 384h1v1h-1zM390 355h1v1h-1zM390 327h1v1h-1zM390 298h1v1h-1zM390 269h1v1h-1zM390 241h1v1h-1zM390 212h1v1h-1zM390 184h1v1h-1zM418 727h1v1h-1zM418 698h1v1h-1zM418 670h1v1h-1zM418 641h1v1h-1zM418 612h1v1h-1zM418 584h1v1h-1zM418 555h1v1h-1zM418 527h1v1h-1zM418 498h1v1h-1zM418 470h1v1h-1zM418 441h1v1h-1zM418 412h1v1h-1zM418 384h1v1h-1zM418 355h1v1h-1zM418 327h1v1h-1zM418 298h1v1h-1zM418 269h1v1h-1zM418 241h1v1h-1zM418 212h1v1h-1zM418 184h1v1h-1zM447 727h1v1h-1zM447 698h1v1h-1zM447 670h1v1h-1zM447 641h1v1h-1zM447 612h1v1h-1zM447 584h1v1h-1zM447 555h1v1h-1zM447 527h1v1h-1zM447 498h1v1h-1zM447 470h1v1h-1zM447 441h1v1h-1zM447 412h1v1h-1zM447 384h1v1h-1zM447 355h1v1h-1zM447 327h1v1h-1zM447 298h1v1h-1zM447 269h1v1h-1zM447 241h1v1h-1zM447 212h1v1h-1zM447 184h1v1h-1zM475 727h1v1h-1zM475 698h1v1h-1zM475 670h1v1h-1zM475 641h1v1h-1zM475 612h1v1h-1zM475 584h1v1h-1zM475 555h1v1h-1zM475 527h1v1h-1zM475 498h1v1h-1zM475 470h1v1h-1zM475 441h1v1h-1zM475 412h1v1h-1zM475 384h1v1h-1zM475 355h1v1h-1zM475 327h1v1h-1zM475 298h1v1h-1zM475 269h1v1h-1zM475 241h1v1h-1zM475 212h1v1h-1zM475 184h1v1h-1zM504 727h1v1h-1zM504 698h1v1h-1zM504 670h1v1h-1zM504 641h1v1h-1zM504 612h1v1h-1zM504 584h1v1h-1zM504 555h1v1h-1zM504 527h1v1h-1zM504 498h1v1h-1zM504 470h1v1h-1zM504 441h1v1h-1zM504 412h1v1h-1zM504 384h1v1h-1zM504 355h1v1h-1zM504 327h1v1h-1zM504 298h1v1h-1zM504 269h1v1h-1zM504 241h1v1h-1zM504 212h1v1h-1zM504 184h1v1h-1zM533 727h1v1h-1zM533 698h1v1h-1zM533 670h1v1h-1zM533 641h1v1h-1zM533 612h1v1h-1zM533 584h1v1h-1zM533 555h1v1h-1zM533 527h1v1h-1zM533 498h1v1h-1zM533 470h1v1h-1zM533 441h1v1h-1zM533 412h1v1h-1zM533 384h1v1h-1zM533 355h1v1h-1zM533 327h1v1h-1zM533 298h1v1h-1zM533 269h1v1h-1zM533 241h1v1h-1zM533 212h1v1h-1zM533 184h1v1h-1zM561 727h1v1h-1zM561 698h1v1h-1zM561 670h1v1h-1zM561 641h1v1h-1zM561 612h1v1h-1zM561 584h1v1h-1zM561 555h1v1h-1zM561 527h1v1h-1zM561 498h1v1h-1zM561 470h1v1h-1zM561 441h1v1h-1zM561 412h1v1h-1zM561 384h1v1h-1zM561 355h1v1h-1zM561 327h1v1h-1zM561 298h1v1h-1zM561 269h1v1h-1zM561 241h1v1h-1zM561 212h1v1h-1zM561 184h1v1h-1zM590 727h1v1h-1zM590 698h1v1h-1zM590 670h1v1h-1zM590 641h1v1h-1zM590 612h1v1h-1zM590 584h1v1h-1zM590 555h1v1h-1zM590 527h1v1h-1zM590 498h1v1h-1zM590 470h1v1h-1zM590 441h1v1h-1zM590 412h1v1h-1zM590 384h1v1h-1zM590 355h1v1h-1zM590 327h1v1h-1zM590 298h1v1h-1zM590 269h1v1h-1zM590 241h1v1h-1zM590 212h1v1h-1zM590 184h1v1h-1zM618 727h1v1h-1zM618 698h1v1h-1zM618 670h1v1h-1zM618 641h1v1h-1zM618 612h1v1h-1zM618 584h1v1h-1zM618 555h1v1h-1zM618 527h1v1h-1zM618 498h1v1h-1zM618 470h1v1h-1zM618 441h1v1h-1zM618 412h1v1h-1zM618 384h1v1h-1zM618 355h1v1h-1zM618 327h1v1h-1zM618 298h1v1h-1zM618 269h1v1h-1zM618 241h1v1h-1zM618 212h1v1h-1zM618 184h1v1h-1zM647 727h1v1h-1zM647 698h1v1h-1zM647 670h1v1h-1zM647 641h1v1h-1zM647 612h1v1h-1zM647 584h1v1h-1zM647 555h1v1h-1zM647 527h1v1h-1zM647 498h1v1h-1zM647 470h1v1h-1zM647 441h1v1h-1zM647 412h1v1h-1zM647 384h1v1h-1zM647 355h1v1h-1zM647 327h1v1h-1zM647 298h1v1h-1zM647 269h1v1h-1zM647 241h1v1h-1zM647 212h1v1h-1zM647 184h1v1h-1zM676 727h1v1h-1zM676 698h1v1h-1zM676 670h1v1h-1zM676 641h1v1h-1zM676 612h1v1h-1zM676 584h1v1h-1zM676 555h1v1h-1zM676 527h1v1h-1zM676 498h1v1h-1zM676 470h1v1h-1zM676 441h1v1h-1zM676 412h1v1h-1zM676 384h1v1h-1zM676 355h1v1h-1zM676 327h1v1h-1zM676 298h1v1h-1zM676 269h1v1h-1zM676 241h1v1h-1zM676 212h1v1h-1zM676 184h1v1h-1zM704 727h1v1h-1zM704 698h1v1h-1zM704 670h1v1h-1zM704 641h1v1h-1zM704 612h1v1h-1zM704 584h1v1h-1zM704 555h1v1h-1zM704 527h1v1h-1zM704 498h1v1h-1zM704 470h1v1h-1zM704 441h1v1h-1zM704 412h1v1h-1zM704 384h1v1h-1zM704 355h1v1h-1zM704 327h1v1h-1zM704 298h1v1h-1zM704 269h1v1h-1zM704 241h1v1h-1zM704 212h1v1h-1zM704 184h1v1h-1zM733 727h1v1h-1zM733 698h1v1h-1zM733 670h1v1h-1zM733 641h1v1h-1zM733 612h1v1h-1zM733 584h1v1h-1zM733 555h1v1h-1zM733 527h1v1h-1zM733 498h1v1h-1zM733 470h1v1h-1zM733 441h1v1h-1zM733 412h1v1h-1zM733 384h1v1h-1zM733 355h1v1h-1zM733 327h1v1h-1zM733 298h1v1h-1zM733 269h1v1h-1zM733 241h1v1h-1zM733 212h1v1h-1zM733 184h1v1h-1zM761 727h1v1h-1zM761 698h1v1h-1zM761 670h1v1h-1zM761 641h1v1h-1zM761 612h1v1h-1zM761 584h1v1h-1zM761 555h1v1h-1zM761 527h1v1h-1zM761 498h1v1h-1zM761 470h1v1h-1zM761 441h1v1h-1zM761 412h1v1h-1zM761 384h1v1h-1zM761 355h1v1h-1zM761 327h1v1h-1zM761 298h1v1h-1zM761 269h1v1h-1zM761 241h1v1h-1zM761 212h1v1h-1zM761 184h1v1h-1zM790 727h1v1h-1zM790 698h1v1h-1zM790 670h1v1h-1zM790 641h1v1h-1zM790 612h1v1h-1zM790 584h1v1h-1zM790 555h1v1h-1zM790 527h1v1h-1zM790 498h1v1h-1zM790 470h1v1h-1zM790 441h1v1h-1zM790 412h1v1h-1zM790 384h1v1h-1zM790 355h1v1h-1zM790 327h1v1h-1zM790 298h1v1h-1zM790 269h1v1h-1zM790 241h1v1h-1zM790 212h1v1h-1zM790 184h1v1h-1zM819 727h1v1h-1zM819 698h1v1h-1zM819 670h1v1h-1zM819 641h1v1h-1zM819 612h1v1h-1zM819 584h1v1h-1zM819 555h1v1h-1zM819 527h1v1h-1zM819 498h1v1h-1zM819 470h1v1h-1zM819 441h1v1h-1zM819 412h1v1h-1zM819 384h1v1h-1zM819 355h1v1h-1zM819 327h1v1h-1zM819 298h1v1h-1zM819 269h1v1h-1zM819 241h1v1h-1zM819 212h1v1h-1zM819 184h1v1h-1zM847 727h1v1h-1zM847 698h1v1h-1zM847 670h1v1h-1zM847 641h1v1h-1zM847 612h1v1h-1zM847 584h1v1h-1zM847 555h1v1h-1zM847 527h1v1h-1zM847 498h1v1h-1zM847 470h1v1h-1zM847 441h1v1h-1zM847 412h1v1h-1zM847 384h1v1h-1zM847 355h1v1h-1zM847 327h1v1h-1zM847 298h1v1h-1zM847 269h1v1h-1zM847 241h1v1h-1zM847 212h1v1h-1zM847 184h1v1h-1zM876 727h1v1h-1zM876 698h1v1h-1zM876 670h1v1h-1zM876 641h1v1h-1zM876 612h1v1h-1zM876 584h1v1h-1zM876 555h1v1h-1zM876 527h1v1h-1zM876 498h1v1h-1zM876 470h1v1h-1zM876 441h1v1h-1zM876 412h1v1h-1zM876 384h1v1h-1zM876 355h1v1h-1zM876 327h1v1h-1zM876 298h1v1h-1zM876 269h1v1h-1zM876 241h1v1h-1zM876 212h1v1h-1zM876 184h1v1h-1zM904 727h1v1h-1zM904 698h1v1h-1zM904 670h1v1h-1zM904 641h1v1h-1zM904 612h1v1h-1zM904 584h1v1h-1zM904 555h1v1h-1zM904 527h1v1h-1zM904 498h1v1h-1zM904 470h1v1h-1zM904 441h1v1h-1zM904 412h1v1h-1zM904 384h1v1h-1zM904 355h1v1h-1zM904 327h1v1h-1zM904 298h1v1h-1zM904 269h1v1h-1zM904 241h1v1h-1zM904 212h1v1h-1zM904 184h1v1h-1zM933 727h1v1h-1zM933 698h1v1h-1zM933 670h1v1h-1zM933 641h1v1h-1zM933 612h1v1h-1zM933 584h1v1h-1zM933 555h1v1h-1zM933 527h1v1h-1zM933 498h1v1h-1zM933 470h1v1h-1zM933 441h1v1h-1zM933 412h1v1h-1zM933 384h1v1h-1zM933 355h1v1h-1zM933 327h1v1h-1zM933 298h1v1h-1zM933 269h1v1h-1zM933 241h1v1h-1zM933 212h1v1h-1zM933 184h1v1h-1zM961 727h1v1h-1zM961 698h1v1h-1zM961 670h1v1h-1zM961 641h1v1h-1zM961 612h1v1h-1zM961 584h1v1h-1zM961 555h1v1h-1zM961 527h1v1h-1zM961 498h1v1h-1zM961 470h1v1h-1zM961 441h1v1h-1zM961 412h1v1h-1zM961 384h1v1h-1zM961 355h1v1h-1zM961 327h1v1h-1zM961 298h1v1h-1zM961 269h1v1h-1zM961 241h1v1h-1zM961 212h1v1h-1zM961 184h1v1h-1zM990 727h1v1h-1zM990 698h1v1h-1zM990 670h1v1h-1zM990 641h1v1h-1zM990 612h1v1h-1zM990 584h1v1h-1zM990 555h1v1h-1zM990 527h1v1h-1zM990 498h1v1h-1zM990 470h1v1h-1zM990 441h1v1h-1zM990 412h1v1h-1zM990 384h1v1h-1zM990 355h1v1h-1zM990 327h1v1h-1zM990 298h1v1h-1zM990 269h1v1h-1zM990 241h1v1h-1zM990 212h1v1h-1zM990 184h1v1h-1zM1019 727h1v1h-1zM1019 698h1v1h-1zM1019 670h1v1h-1zM1019 641h1v1h-1zM1019 612h1v1h-1zM1019 584h1v1h-1zM1019 555h1v1h-1zM1019 527h1v1h-1zM1019 498h1v1h-1zM1019 470h1v1h-1zM1019 441h1v1h-1zM1019 412h1v1h-1zM1019 384h1v1h-1zM1019 355h1v1h-1zM1019 327h1v1h-1zM1019 298h1v1h-1zM1019 269h1v1h-1zM1019 241h1v1h-1zM1019 212h1v1h-1zM1019 184h1v1h-1zM1047 727h1v1h-1zM1047 698h1v1h-1zM1047 670h1v1h-1zM1047 641h1v1h-1zM1047 612h1v1h-1zM1047 584h1v1h-1zM1047 555h1v1h-1zM1047 527h1v1h-1zM1047 498h1v1h-1zM1047 470h1v1h-1zM1047 441h1v1h-1zM1047 412h1v1h-1zM1047 384h1v1h-1zM1047 355h1v1h-1zM1047 327h1v1h-1zM1047 298h1v1h-1zM1047 269h1v1h-1zM1047 241h1v1h-1zM1047 212h1v1h-1zM1047 184h1v1h-1zM1076 727h1v1h-1zM1076 698h1v1h-1zM1076 670h1v1h-1zM1076 641h1v1h-1zM1076 612h1v1h-1zM1076 584h1v1h-1zM1076 555h1v1h-1zM1076 527h1v1h-1zM1076 498h1v1h-1zM1076 470h1v1h-1zM1076 441h1v1h-1zM1076 412h1v1h-1zM1076 384h1v1h-1zM1076 355h1v1h-1zM1076 327h1v1h-1zM1076 298h1v1h-1zM1076 269h1v1h-1zM1076 241h1v1h-1zM1076 212h1v1h-1zM1076 184h1v1h-1zM1104 727h1v1h-1zM1104 698h1v1h-1zM1104 670h1v1h-1zM1104 641h1v1h-1zM1104 612h1v1h-1zM1104 584h1v1h-1zM1104 555h1v1h-1zM1104 527h1v1h-1zM1104 498h1v1h-1zM1104 470h1v1h-1zM1104 441h1v1h-1zM1104 412h1v1h-1zM1104 384h1v1h-1zM1104 355h1v1h-1zM1104 327h1v1h-1zM1104 298h1v1h-1zM1104 269h1v1h-1zM1104 241h1v1h-1zM1104 212h1v1h-1zM1104 184h1v1h-1zM1133 727h1v1h-1zM1133 698h1v1h-1zM1133 670h1v1h-1zM1133 641h1v1h-1zM1133 612h1v1h-1zM1133 584h1v1h-1zM1133 555h1v1h-1zM1133 527h1v1h-1zM1133 498h1v1h-1zM1133 470h1v1h-1zM1133 441h1v1h-1zM1133 412h1v1h-1zM1133 384h1v1h-1zM1133 355h1v1h-1zM1133 327h1v1h-1zM1133 298h1v1h-1zM1133 269h1v1h-1zM1133 241h1v1h-1zM1133 212h1v1h-1zM1133 184h1v1h-1z"/></svg><svg style="left:0;top:0" width="1160" height="740" viewBox="0 0 1160 740"><defs><clipPath id="mc"><rect x="333" y="269.5" width="565.5" height="349.5"/></clipPath></defs><g clip-path="url(#mc)" fill="none" stroke-width="0.75">
<path d="M360.7 269.7 L358.7 286.3M332.0 290.3 L342.7 291.3 L349.7 291.6 L350.7 285.7 L358.7 286.3 L369.7 287.7M332.0 297.3 L338.7 298.3 L337.7 308.0M332.0 307.3 L337.7 308.3 L345.3 308.9 L346.7 299.6 L433.3 308.4 L436.7 309.6 L439.3 312.7 L441.3 316.7M345.3 308.9 L388.4 314.0 L388.9 312.8 L389.7 314.1 L421.3 316.4 L415.3 328.7 L412.7 338.0 L410.0 350.7 L402.7 373.7M398.7 346.0 L410.4 350.7M398.7 346.0 L388.7 373.7M383.3 354.4 L407.3 357.3M383.3 354.4 L381.3 373.7M390.0 368.7 L402.7 372.7M409.3 355.3 L417.3 360.9M484.7 279.3 L497.3 280.7 L492.4 314.7M483.3 288.7 L495.3 290.0M481.3 305.3 L493.3 306.9M496.7 270.0 L502.7 270.3M510.7 270.0 L510.0 273.3 L530.0 276.0M530.0 283.3 L510.0 280.7 L507.3 301.3 L530.0 304.9M530.0 310.0 L504.7 306.7 L503.1 318.7M473.3 320.7 L471.3 334.0M468.0 333.7 L530.0 340.9M468.0 337.3 L530.0 344.4M468.0 333.7 L468.0 337.3M462.7 336.0 L453.3 335.1 L450.0 340.0 L444.7 342.7 L436.7 346.0M462.7 336.0 L460.0 354.7M467.3 337.3 L465.3 355.3M462.3 339.3 L466.9 339.9M461.9 342.0 L466.7 342.5M461.6 344.7 L466.3 345.2M461.2 347.3 L466.0 347.9M460.8 350.0 L465.7 350.5M460.4 352.7 L465.5 353.2M448.0 353.3 L486.0 357.3 L484.0 373.7M448.0 353.3 L446.0 364.0 L444.0 364.7 L442.7 373.7M530.0 362.7 L518.0 361.3 L514.7 373.7M530.0 275.5 L592.0 283.3 L600.0 276.0 L600.7 269.7M530.0 282.9 L590.0 290.0 L600.0 298.7 L598.7 301.3 L604.3 301.6 L603.3 310.7M607.3 269.7 L607.3 274.3 L616.3 274.7 L615.7 284.9 L623.7 285.6 L622.7 296.4 L632.0 297.3 L640.0 297.7 L646.7 296.0 L653.3 292.0 L668.7 280.0 L661.6 269.7M669.3 270.0 L672.0 272.4 L674.7 270.7 L681.6 280.0 L694.0 270.3M611.3 310.7 L612.0 303.1 L630.7 304.9 L640.0 305.3 L648.0 303.6 L654.7 300.0 L673.3 286.0 L706.0 327.3 L712.0 323.6 L683.3 288.0 L706.4 270.0M530.0 304.5 L565.3 308.7 L566.0 310.0 L597.7 313.3 L597.3 318.7 L568.7 315.3 L567.3 313.7 L530.0 309.7M602.7 310.7 L619.7 312.0 L618.0 326.9 L601.1 324.7 L602.7 310.7M536.0 327.3 L584.9 332.7 L581.6 357.3 L557.3 354.3 L558.3 347.6 L530.0 344.0M536.0 327.3 L534.0 341.2M530.0 340.4 L652.0 355.3 L650.7 373.7M520.0 361.3 L554.9 365.3 L554.4 373.7M586.7 373.7 L586.7 369.3 L622.7 373.7M675.3 373.7 L676.0 364.9 L720.0 369.7M740.9 269.7 L750.0 282.0 L760.7 298.0 L766.7 312.7 L769.3 324.7 L770.0 336.7 L768.7 355.3 L765.3 373.7M747.6 269.7 L756.7 282.0 L766.0 295.3 L772.0 310.0 L774.7 322.0 L775.6 339.6 L777.3 339.6M777.3 335.7 L814.4 339.3 L816.7 333.3 L834.7 334.9 L834.0 339.7M829.3 334.4 L834.7 294.4 L817.3 292.9 L815.6 309.3 L819.6 310.3 L816.7 333.3M784.7 373.7 L785.3 351.6 L800.7 353.3 L801.3 348.0 L810.7 349.3 L809.3 354.7 L800.7 353.3M810.0 350.8 L838.7 353.7 L836.7 373.7M867.1 286.3 L868.7 279.3 L894.7 282.3M857.3 285.7 L882.0 288.0 L879.3 313.3 L854.7 311.3 L857.3 285.7M881.7 288.0 L882.0 285.3 L894.0 286.4M879.3 308.4 L884.7 308.9 L883.3 322.0 L870.0 320.3 L871.1 313.3M864.0 312.7 L862.7 324.7 L876.7 326.0 L876.9 321.3M876.0 326.0 L875.3 330.7 L882.0 335.3 L886.7 340.7 L888.7 344.0 L888.4 373.7M884.7 315.3 L892.0 312.0M891.3 270.3 L891.6 271.6 L898.0 272.4 L896.0 282.0 L898.0 288.0M850.7 373.7 L853.3 358.0 L862.7 358.7 L863.3 357.3 L884.0 359.6 L888.4 355.3M863.3 357.3 L862.0 367.3 L877.3 369.7 L878.7 359.3M720.0 369.7 L737.3 371.6 L736.7 373.7M381.3 373.7 L380.7 385.1 L332.0 379.3M388.7 373.7 L384.0 384.7 L396.7 389.3M402.7 373.7 L392.7 398.7M348.7 407.3 L392.0 411.7M348.7 413.3 L348.7 407.3 L345.3 439.3 L377.3 443.3 L380.0 416.4 L348.7 413.3M354.0 440.7 L353.3 446.9 L368.7 448.3 L368.9 442.0M377.3 443.3 L376.4 451.3 L396.7 454.0M484.0 373.7 L482.0 384.7M442.7 373.7 L442.0 378.7M433.3 377.6 L442.0 378.7 L482.0 384.7 L503.3 386.4 L530.0 390.0M433.3 377.6 L430.0 418.0 L452.7 421.3 L453.3 419.3 L472.0 421.6 L476.7 384.7M431.3 393.3 L424.7 392.4 L421.7 416.4 L430.0 417.7M431.3 393.3 L429.3 406.0 L432.4 406.4M476.7 389.3 L492.0 390.7 L490.0 399.3 L484.7 398.7 L480.7 432.0M476.0 394.4 L480.7 394.9 L476.7 431.7M411.3 423.3 L446.7 427.3 L476.7 431.7M446.7 421.3 L446.0 426.7M470.7 422.0 L470.0 429.3M411.3 428.7 L530.0 444.0M530.0 362.7 L518.0 361.3 L516.0 372.7 L513.7 372.7 L512.0 386.4M503.3 386.4 L499.3 414.0 L501.3 414.7 L500.0 425.3 L522.0 428.7 L522.7 426.7 L530.0 427.7M500.7 401.1 L494.7 400.3 L491.3 424.7 L500.0 425.7M480.7 432.0 L516.0 435.3 L516.7 429.6M650.7 373.7 L647.7 388.3M554.4 373.7 L551.3 392.0M622.7 373.7 L624.7 374.7 L621.3 400.7M586.7 369.3 L585.3 380.7 L583.3 381.1 L581.6 395.3M520.0 388.0 L551.3 392.0 L581.6 395.3 L621.3 400.7 L630.0 402.0 L627.7 418.7M572.7 394.7 L569.3 422.0 L571.3 422.7 L569.3 434.0 L591.3 437.3 L592.7 435.7 L611.3 438.0 L616.0 400.7M570.0 409.6 L564.0 408.7 L561.3 432.7 L569.3 433.6M546.0 392.7 L545.3 398.0 L560.7 398.9 L559.3 407.3 L554.0 406.7 L550.0 439.3 L585.3 444.0 L613.3 447.3 L618.7 411.3 L614.9 410.4 L615.3 405.3 L629.3 406.9M585.3 437.3 L585.3 443.7M609.3 438.7 L610.0 446.0M545.3 398.0 L545.3 402.4 L550.7 403.3 L546.7 439.3 L539.3 438.0 L541.3 429.3 L522.7 427.3 L522.0 429.3 L520.0 429.1M546.0 392.7 L545.3 402.4M520.0 434.9 L546.7 439.3M627.7 418.7 L632.0 386.9 L647.3 388.3 L644.0 420.0 L651.3 421.3 L648.7 444.0 L650.7 446.4M675.3 373.7 L673.3 393.3 L685.3 394.9 L685.7 398.7M673.3 397.3 L720.0 402.9M708.7 396.7 L716.0 397.3 L715.7 401.3 L708.3 400.3 L708.7 396.7M673.3 397.3 L670.0 422.7 L707.3 428.0 L706.7 432.7M620.0 459.7 L720.0 435.5M720.0 369.7 L737.3 372.0 L734.7 402.7 L732.7 426.7M710.0 396.7 L716.0 397.6 L715.6 401.3M722.0 402.0 L722.7 398.4 L734.0 399.3M710.0 400.7 L733.3 403.7M765.3 373.7 L760.0 421.3M784.7 373.7 L782.7 377.3 L807.3 380.3 L808.0 379.3 L836.0 382.0 L836.7 373.7M850.7 373.7 L849.3 385.3 L874.7 389.3 L878.7 359.3M876.0 386.0 L885.3 386.9M888.4 373.7 L883.3 420.7M781.3 417.3 L782.0 412.7 L815.3 410.4 L816.0 416.0M720.0 435.5 L767.3 425.1 L796.7 422.4 L830.0 422.7 L856.7 424.7 L894.0 428.3 L898.0 428.3M806.7 437.3 L807.1 444.0 L775.3 446.7 L774.0 455.3M774.7 451.3 L800.7 454.0 L800.0 463.7M742.7 459.3 L775.3 462.0 L774.7 455.3M721.3 452.0 L723.3 454.7 L723.3 463.7M812.7 437.3 L814.0 450.7 L816.7 457.3 L828.7 460.7 L830.7 453.3 L824.7 450.7 L823.3 437.3M830.7 437.3 L831.3 449.3 L830.7 453.3M838.7 438.0 L838.0 448.7 L832.7 449.3 L866.7 454.4 L865.3 463.7M887.3 449.3 L898.0 450.7M405.3 462.3 L421.7 462.7 L421.3 466.3 L441.7 467.6 L486.7 469.7 L488.7 484.0M441.7 467.6 L440.7 493.3 L404.7 491.6 L405.3 462.3M332.0 487.3 L385.3 496.7M332.0 499.3 L390.0 510.0 L404.7 514.0 L420.7 520.7 L431.3 528.7 L438.0 538.0 L446.0 553.7M404.7 491.6 L405.3 499.3 L410.0 502.7 L423.3 507.3 L431.3 511.3 L439.3 510.7 L443.3 507.3 L450.0 502.7 L463.3 495.3 L490.0 488.0 L530.0 480.0M426.0 503.6 L440.7 503.3 L443.3 506.0 L440.7 510.0 L432.7 511.3 L424.9 508.4 L426.0 503.6M530.0 505.7 L524.0 505.3 L520.7 531.1 L530.0 532.4M530.0 536.0 L520.7 535.3 L519.3 544.0 L530.0 545.7M585.3 444.0 L613.3 447.3 L615.3 442.0M530.0 444.0 L613.3 452.7M520.0 482.7 L578.7 469.1 L620.0 459.7 L693.3 442.0M648.0 442.0 L649.3 446.0 L651.3 447.3M524.0 505.3 L549.3 508.0 L560.0 509.7 L560.7 505.3 L552.7 504.0 L552.0 508.4M524.0 505.3 L521.3 530.7 L557.3 535.3 L559.3 523.3 L570.0 524.7 L572.0 506.4 L560.7 505.3M559.3 527.3 L578.7 530.7M543.3 492.0 L548.7 507.3M520.0 535.3 L535.7 536.9 L534.0 546.7 L520.0 544.7M592.0 501.3 L620.7 504.4 L619.3 512.0 L606.7 510.7 L607.3 503.3M611.3 492.7 L610.7 502.0M625.3 494.7 L622.7 513.3M619.3 512.0 L633.3 514.7 L632.0 526.0 L628.7 525.7 L627.3 538.7 L600.7 535.3 L601.6 520.7 L590.0 519.1 L592.0 501.3M642.7 500.7 L666.7 503.6 L665.3 518.0 L673.3 519.1 L672.7 523.6 L698.7 527.3M665.3 518.0 L664.7 522.7 L654.7 522.0 L652.7 542.0 L664.7 543.6 L665.1 541.3 L670.0 542.0 L668.7 553.7M682.7 525.3 L680.0 553.7M720.0 465.3 L712.0 464.4 L709.3 483.3 L713.3 484.0 L713.6 486.0 L720.0 486.7M703.3 506.0 L701.3 526.7 L712.0 528.0 L708.7 543.3 L720.0 545.3M720.0 513.7 L716.0 513.3 L714.0 527.3M564.7 487.1 L584.0 488.9 L642.7 496.0 L702.0 502.7 L720.0 504.4M642.7 496.0 L642.0 500.7M710.0 452.7 L720.7 452.0 L723.3 454.7 L722.7 462.7 L742.7 464.7 L743.1 459.1 L760.0 460.9 L774.7 462.7 L775.3 455.3 L774.0 454.7 L774.7 447.3 L776.7 445.3 L806.7 443.6 L807.3 442.0M800.0 463.7 L797.3 480.7 L794.7 480.7 L793.3 490.7 L772.0 488.0 L771.3 489.3 L756.7 487.3 L746.7 486.7 L746.0 488.9 L714.0 485.3 L713.3 483.3 L710.0 482.7M760.0 460.9 L756.7 487.3M722.7 462.7 L722.0 464.7 L712.0 464.1M814.0 450.7 L816.7 457.3 L828.7 460.7 L830.7 453.3 L824.7 450.7 L823.3 442.0M830.7 442.0 L831.3 449.3 L830.7 453.3M838.0 448.7 L832.7 449.3 L866.7 454.4 L865.3 463.7 L862.0 484.0 L846.0 480.7 L846.7 478.3 L827.3 474.0 L830.7 453.3M898.0 482.0 L894.0 486.0 L898.0 490.7M882.7 504.7 L898.0 506.7M898.0 511.3 L892.0 517.3 L898.0 523.6M882.7 504.7 L875.3 553.7M878.7 546.0 L898.0 548.7M720.0 504.4 L761.3 508.7 L824.7 517.3M716.0 513.3 L746.7 516.7 L747.3 511.3 L760.7 512.7M739.3 516.4 L740.0 519.1 L746.0 519.6M746.0 519.6 L758.0 521.7 L756.0 537.3 L724.0 533.3 L723.3 544.0 L734.0 545.3 L734.7 540.7 L752.7 542.7 L753.3 537.3M716.0 513.3 L713.3 528.7 L710.0 528.4M824.0 518.0 L773.3 513.3 L772.0 514.7 L774.0 518.0 L776.7 519.6 L775.3 533.3 L769.3 532.7 L767.3 553.7M776.7 519.6 L800.0 522.7 L800.7 525.3 L806.7 525.7 L807.3 523.3 L816.0 524.4 L814.0 543.3 L793.3 540.9 L791.3 553.7M823.3 518.0 L820.7 545.3 L834.7 547.1 L836.7 525.7 L860.7 528.7 L862.0 532.0 L866.7 532.7 L868.0 529.3 L876.7 530.7M835.3 532.9 L826.7 532.4 L824.9 545.3M832.0 546.7 L831.3 553.7M854.7 553.7 L855.3 548.7 L875.3 550.7M434.0 532.0 L446.0 552.0 L456.0 564.0M454.0 562.7 L447.3 568.3 L411.3 571.6 L380.0 603.3 L377.3 618.9M411.3 571.6 L408.0 592.0 L411.3 589.3 L444.7 595.7 L446.0 617.3M408.0 592.0 L406.0 618.9M410.7 592.7 L440.0 598.3 L436.0 616.3 L447.3 618.7M408.0 612.0 L425.3 615.7 L425.7 618.9M468.7 582.7 L459.3 581.6 L454.0 586.7 L450.0 594.7 L446.0 618.7M530.0 580.0 L498.0 578.4 L494.0 581.3 L491.3 586.7 L492.0 590.7M520.7 535.3 L519.3 544.0 L530.0 545.7M520.0 535.3 L535.7 536.9 L534.0 546.7 L520.0 544.7M533.3 532.0 L557.3 535.3 L558.7 532.0M600.0 532.0 L600.7 535.3 L627.3 538.7 L628.0 532.0M653.3 532.0 L652.7 542.0 L664.7 543.6 L665.1 541.3 L670.0 542.0 L668.0 554.0 L680.0 556.0 L682.7 532.0M710.0 532.0 L708.7 543.3 L720.0 545.3M520.0 579.3 L586.7 583.3 L634.7 587.3 L692.0 590.7 L720.0 593.1M573.3 592.7 L584.0 592.0 L588.0 597.3 L585.3 602.7 L584.7 614.7 L581.3 618.4 L573.3 617.3 L571.3 613.3 L573.3 592.7M673.3 618.9 L674.0 598.7 L640.7 596.7 L639.3 599.1 L629.6 598.0 L629.3 592.4 L595.3 590.4 L594.0 605.1 L588.7 605.1 L587.3 617.1 L608.7 618.7M634.7 587.3 L639.3 596.7M640.0 597.3 L639.7 603.3 L690.7 606.7M667.3 604.7 L666.7 618.9M701.3 596.0 L706.0 596.3 L708.7 600.7 L708.3 612.0 L704.7 615.7 L700.0 615.3 L696.7 611.3 L698.0 600.0 L701.3 596.0M756.0 537.3 L724.0 533.3 L723.3 544.0 L734.0 545.3 L734.7 540.7 L752.7 542.7 L753.3 537.3M710.0 543.3 L723.3 544.0M775.3 533.3 L769.3 532.7 L767.3 552.7 L757.3 552.0M816.0 532.0 L814.0 543.3 L793.3 540.9 L791.3 553.7 L778.0 551.7 L777.3 554.0 L767.3 552.7M836.0 532.0 L834.7 547.1 L820.7 545.3M826.7 532.0 L824.9 545.3M832.0 546.7 L830.7 556.0 L840.0 557.3 L841.3 552.0 L854.7 553.6 L855.3 548.7 L875.3 549.3M868.0 550.0 L867.3 557.3 L874.7 558.7M879.3 532.0 L878.7 546.0 L898.0 548.7M898.0 560.7 L894.7 560.3 L885.3 567.3 L896.7 581.3M896.7 564.7 L898.0 561.3M805.3 579.3 L812.7 580.3 L812.0 589.3 L804.0 588.3 L805.3 579.3M710.0 592.3 L744.7 594.7 L760.7 597.6 L760.4 606.7M744.7 594.7 L744.0 604.7M759.3 618.9 L760.7 606.7 L733.3 604.4 L727.3 618.9M727.3 610.7 L724.0 618.9M780.7 589.3 L776.7 618.9M884.0 618.0 L898.0 618.7" stroke="#dcdcdc"/>
<path d="M372.0 269.7 L369.3 294.0 L449.3 302.0M467.3 269.7 L449.3 302.0 L440.7 317.3 L418.7 356.7 L411.3 373.7M422.0 373.7 L431.3 355.3 L443.3 332.7 L451.3 319.3 L455.3 316.0 L463.3 315.3 L479.3 316.7 L530.0 322.7M485.3 269.7 L479.3 316.0M520.0 321.1 L628.3 334.0 L664.0 337.7M634.0 269.7 L628.3 334.0M720.0 335.3 L664.7 329.7 L664.0 337.7 L659.3 373.7M786.0 269.7 L776.7 339.3 L772.7 373.7M783.7 276.0 L785.6 277.3M720.0 335.6 L767.3 340.9 L763.3 373.7M842.7 269.7 L834.7 334.7 L896.7 345.7M850.0 270.3 L898.0 276.0M898.0 280.0 L894.7 282.7 L888.7 344.0M898.0 338.0 L896.7 345.7 L895.6 373.7M896.0 351.3 L898.3 351.3M842.7 336.0 L839.3 373.7M411.3 373.7 L408.0 384.7 L404.7 399.3 L402.7 412.7 L399.3 437.3 L396.0 463.7M422.0 373.7 L417.3 386.7 L413.3 408.0 L410.0 431.3 L408.0 448.0 L406.0 463.7M332.7 390.7 L392.7 398.0 L404.7 399.3M392.7 398.0 L392.0 411.7 L402.7 412.7M410.0 431.3 L530.0 444.7M530.0 444.0 L618.7 454.0M576.0 463.7 L618.7 454.0 L651.3 446.4 L720.0 430.4M651.3 446.4 L660.5 373.7M663.3 463.7 L720.0 450.7M710.0 432.7 L757.3 422.0 L767.3 420.7 L790.0 418.0 L816.7 416.7 L836.7 417.1 L856.7 418.7 L890.0 422.0 L898.7 422.0M710.0 453.3 L750.0 444.0 L776.7 439.3 L810.0 436.4 L830.0 436.7 L848.0 438.0 L887.3 442.7 L898.7 443.3M763.3 373.7 L757.3 422.0M772.7 373.7 L767.3 420.7M839.3 373.7 L836.0 417.1M895.6 373.7 L890.3 422.0M810.0 436.4 L808.0 463.7M887.3 442.7 L884.9 463.7M396.0 463.7 L394.7 488.7 L391.3 494.7 L386.0 496.9M406.0 463.7 L404.0 492.7 L406.7 498.0 L420.7 498.7 L439.3 498.3 L465.3 489.3 L530.0 474.0M332.0 488.7 L386.0 496.9 L406.0 498.3M420.7 498.7 L455.3 536.0 L460.7 546.0 L467.3 553.7M530.0 495.3 L476.7 507.3 L463.3 512.7 L456.7 520.7 L454.7 528.7 L456.0 536.7M332.0 499.1 L386.0 508.7 L404.7 514.0 L418.0 522.0 L438.0 541.3 L448.7 553.7M400.7 514.7 L402.0 553.7M506.0 442.0 L530.0 444.0M520.0 497.7 L564.7 487.1 L583.3 488.9M584.0 482.0 L577.3 553.7M584.0 482.0 L591.3 480.9 L606.7 481.7 L607.3 478.0 L610.7 476.0 L720.0 450.7M606.7 481.7 L642.7 486.7 L702.7 493.3 L720.0 495.3M642.7 486.7 L636.0 553.7M702.7 493.3 L696.7 553.7M520.0 477.3 L618.7 454.0 L651.3 446.7 L670.7 442.0M520.0 442.9 L618.7 454.0M651.3 446.7 L652.0 442.0M710.0 452.9 L761.3 442.0M810.0 442.0 L804.0 504.0M710.0 493.3 L761.3 499.3 L804.0 504.0 L822.0 506.0 L879.3 512.0M761.3 499.3 L756.7 553.7M822.0 506.0 L816.7 553.7M888.0 442.0 L879.3 512.0 L875.3 553.7M883.3 442.7 L898.0 443.3M878.7 522.0 L898.0 524.4M401.3 532.0 L402.3 618.9M429.3 532.0 L448.7 553.7 L494.7 618.9M451.3 532.0 L456.0 536.7 L467.3 553.7 L512.0 618.9M476.7 568.3 L530.0 571.3M520.0 570.7 L575.3 574.7 L633.3 578.7 L693.3 582.7 L720.0 584.4M579.3 532.0 L575.3 574.7M638.7 532.0 L633.3 578.7M698.7 532.0 L693.3 582.7 L690.4 618.9M710.0 583.3 L753.3 586.7 L786.0 589.1 L812.7 590.7 L871.3 594.7M758.7 532.0 L753.3 586.7M819.3 532.0 L812.7 590.7M877.3 532.0 L873.3 579.3 L871.3 594.7 L868.7 618.9M873.3 579.3 L898.0 581.6M786.0 589.1 L782.7 618.9" stroke="#00d6d6" stroke-width="0.9"/>
<circle cx="452.9" cy="313.3" r="1.2" stroke="#ddd" stroke-width="0.8"/>
<circle cx="602.9" cy="287.1" r="5.7" stroke="#ddd" stroke-width="0.8"/>
<circle cx="767.3" cy="425.7" r="1.2" stroke="#ddd" stroke-width="0.8"/>
<circle cx="894.0" cy="428.3" r="1.2" stroke="#ddd" stroke-width="0.8"/>
<circle cx="390.0" cy="507.6" r="1.2" stroke="#ddd" stroke-width="0.8"/>
<circle cx="578.3" cy="469.1" r="1.2" stroke="#ddd" stroke-width="0.8"/>
</g>
<g font-family="Liberation Sans, sans-serif" font-size="9" lengthAdjust="spacingAndGlyphs" style="font-weight:400"><text x="718.7" y="299.0" textLength="14.6" fill="#e6e600">445</text><text x="842.0" y="327.0" textLength="18.7" fill="#e6e600">2360</text><text x="642.0" y="351.0" textLength="15.3" fill="#e6e600">548</text><text x="707.5" y="358.7" textLength="15.8" fill="#e6e600">1931</text><text x="390.7" y="409.3" textLength="16.6" fill="#e6e600">1580</text><text x="448.7" y="459.3" textLength="17.3" fill="#e6e600">1549</text><text x="349.3" y="465.3" textLength="19.4" fill="#e6e600">2546</text><text x="488.7" y="545.0" textLength="17.3" fill="#e6e600">1703</text><text x="664.7" y="480.0" textLength="15.3" fill="#e6e600">1612</text><text x="836.7" y="497.3" textLength="16.6" fill="#e6e600">1810</text><text x="882.0" y="500.0" textLength="19.3" fill="#e6e600">2506</text><text x="855.0" y="409.3" textLength="15.7" fill="#e6e600">1614</text><text x="599.3" y="560.3" textLength="16.7" fill="#e6e600">1705</text><text x="656.0" y="569.3" textLength="17.0" fill="#e6e600">1706</text><text x="550.0" y="609.3" textLength="13.7" fill="#e6e600">555</text><text x="719.3" y="568.3" textLength="17.1" fill="#e6e600">1707</text><text x="776.0" y="575.0" textLength="18.3" fill="#e6e600">1708</text><text x="836.0" y="577.0" textLength="14.0" fill="#e6e600">552</text><text x="877.0" y="560.3" textLength="14.6" fill="#e6e600">550</text><text x="465.3" y="617.6" textLength="16.7" fill="#e6e600">1953</text><text x="456.0" y="320.0" textLength="38.0" fill="#e8801a">52563284</text><text x="385.7" y="517.3" textLength="37.6" fill="#e8801a">52563236</text><text x="580.7" y="463.6" textLength="38.6" fill="#e8801a">52563692</text><text x="773.3" y="431.7" textLength="38.0" fill="#e8801a">52563693</text><text x="852.7" y="433.3" textLength="38.6" fill="#e8801a">52563694</text><text transform="translate(402.6,430.2) rotate(97.7)" textLength="23.5" fill="#e6e600">43506</text><text transform="translate(627.5,468.6) rotate(-14)" textLength="24" fill="#e6e600">43505</text><g fill="#c8c8c8" font-size="10"><text transform="translate(426.5,364.5) rotate(-57)" textLength="52.5">Exercitation</text><text transform="translate(674,456.6) rotate(-13.5)" textLength="62">Magna Aliqua</text><text transform="translate(703.7,501.6) rotate(6.4)" textLength="54">Laboris Nisi</text><text transform="translate(471,580) rotate(55)" textLength="63">Minim Veniam</text></g></g>
</svg><div class="a" style="left:72px;top:746.5px;width:1081px;height:53px;background:#ececec"></div><div class="a" style="left:72.5px;top:748.2px;width:1080.5px;height:22.6px;background:#fff;border-top:1.6px solid #c2c2c2;border-left:1px solid #cfcfcf;border-bottom:1px solid #cfcfcf"></div><div class="a" style="left:1139px;top:750px;width:14px;height:20px;background:#fafafa"></div><div class="a" style="left:1142px;top:747px;width:8px;height:21px;border-radius:4px;background:#7f7f7f"></div><span class="t" style="left:77.30px;top:750.60px;font-size:13px;line-height:16px;color:#0000dd;letter-spacing:-0.009px;font-style:italic;">Command:</span><span class="t" style="left:145.60px;top:750.60px;font-size:13px;line-height:16px;color:#0000dd;letter-spacing:0.142px;">layeradd</span><div class="a" style="left:142px;top:776px;width:985px;height:18px;background:#fff"></div><span class="t" style="left:73.00px;top:778.20px;font-size:13.5px;line-height:16px;color:#111;letter-spacing:-0.190px;">Command:</span><div class="a" style="left:1127px;top:772px;width:26px;height:26px;background:#f4f4f4;border:1px solid #b5b5b5"></div><div class="a" style="left:1133px;top:780px;width:14px;height:10px;background:#f4f4f4;border:1px solid #222;border-top:3px solid #000"></div>
<div class="a" style="left:1155px;top:123px;width:300px;height:676px;background:#ececec"></div><svg style="left:1156px;top:125px" width="36" height="16" viewBox="0 0 36 16"><circle cx="8" cy="8" r="6.6" fill="#4d4d4d"/><path d="M5.2 5.2 L10.8 10.8 M10.8 5.2 L5.2 10.8" stroke="#f2f2f2" stroke-width="1.9"/><circle cx="26" cy="8" r="6.6" fill="#4d4d4d"/><rect x="24.4" y="5.2" width="5" height="4" fill="none" stroke="#f2f2f2" stroke-width="1.1"/><rect x="22.6" y="7" width="5" height="4" fill="#4d4d4d" stroke="#f2f2f2" stroke-width="1.1"/></svg><span class="t" style="left:1297.00px;top:126.00px;font-size:13px;line-height:16px;color:#1a1a1a;letter-spacing:-0.536px;">Layer List</span><div class="a" style="left:1155px;top:146px;width:60px;height:25px;border:1px solid #adadad;border-bottom:1.5px solid #a6a6a6;background:linear-gradient(#f6f6f6,#efefef 48%,#e3e3e3 52%,#ebebeb)"></div><div class="a" style="left:1215px;top:146px;width:60px;height:25px;border:1px solid #adadad;border-bottom:1.5px solid #a6a6a6;background:linear-gradient(#f6f6f6,#efefef 48%,#e3e3e3 52%,#ebebeb)"></div><div class="a" style="left:1275px;top:146px;width:60px;height:25px;border:1px solid #adadad;border-bottom:1.5px solid #a6a6a6;background:linear-gradient(#f6f6f6,#efefef 48%,#e3e3e3 52%,#ebebeb)"></div><div class="a" style="left:1335px;top:146px;width:60px;height:25px;border:1px solid #adadad;border-bottom:1.5px solid #a6a6a6;background:linear-gradient(#f6f6f6,#efefef 48%,#e3e3e3 52%,#ebebeb)"></div><div class="a" style="left:1395px;top:146px;width:60px;height:25px;border:1px solid #adadad;border-bottom:1.5px solid #a6a6a6;background:linear-gradient(#f6f6f6,#efefef 48%,#e3e3e3 52%,#ebebeb)"></div><div class="a" style="left:1155px;top:171px;width:299px;height:387px;background:#fff;border:1px solid #c6c6c6;border-top:none"></div><div class="a" style="left:1156px;top:192px;width:297px;height:20px;background:#0848d8"></div><div class="a" style="left:1181px;top:178px;width:16px;height:9px;background:#fff;border:1.2px solid #000"></div><div class="a" style="left:1181px;top:198px;width:16px;height:9px;background:#353c4e"></div><span class="t" style="left:1203.30px;top:174.30px;font-size:13.5px;line-height:16px;color:#111;">0</span><span class="t" style="left:1203.00px;top:194.40px;font-size:13.5px;line-height:16px;color:#fff;letter-spacing:-0.289px;">Text</span><svg style="left:1155px;top:123px" width="300" height="100" viewBox="1155 123 300 100"><defs><g id="eye"><path d="M-7.8 0.4 Q-4.4 -5.8 0.4 -5.8 Q5.2 -5.8 7.8 0 Q4.2 5.4 0 5.4 Q-4.6 5.4 -7.8 0.4Z" fill="currentColor"/><path d="M-4.8 0.4 Q-2.5 -1.4 0.4 -1.6 Q3.2 -1.4 5.2 0.2 Q3 3.4 0.2 3.4 Q-2.8 3.4 -4.8 0.4Z" fill="#fff"/><circle cx="0.3" cy="0.5" r="2.3" fill="currentColor"/><circle cx="-0.5" cy="-0.3" r="0.7" fill="#fff"/></g><g id="pen"><path d="M0 0 L2.6 -1.5 L14.4 -1.5 L14.4 1.5 L2.6 1.5 Z" fill="#e8a33a" stroke="#9a6a1c" stroke-width="0.5"/><path d="M0 0 L2.6 -1.5 L2.6 1.5Z" fill="#caa36a"/><rect x="14.4" y="-1.5" width="3.2" height="3" rx="0.6" fill="#e03a32"/></g><g id="lock"><path d="M-2.8 -1 L-2.8 -4.2 Q-2.8 -7 0 -7 Q2.8 -7 2.8 -4.2 L2.8 -1" fill="none" stroke="#b5b5b5" stroke-width="1.3"/><rect x="-4.8" y="-1" width="9.6" height="7.4" fill="#b0b0b0"/></g></defs><use href="#eye" x="1185" y="158" color="#000"/><use href="#eye" x="1245" y="158" color="#a4a4a4"/><path d="M1299 158 L1311 158 M1305 152 L1305 164" stroke="#e60000" stroke-width="2.6"/><path d="M1359 158 L1371 158" stroke="#e60000" stroke-width="2.8"/><g transform="translate(1418.4,164.4) rotate(-44)"><use href="#pen"/></g><use href="#eye" x="1422.6" y="182" color="#000"/><use href="#eye" x="1422.6" y="202" color="#000"/><use href="#lock" x="1445" y="182.6"/><use href="#lock" x="1445" y="202.6"/><g transform="translate(1395.4,208.6) rotate(-44)"><use href="#pen"/></g></svg><svg style="left:1156px;top:561px" width="36" height="16" viewBox="0 0 36 16"><circle cx="8" cy="8" r="6.6" fill="#4d4d4d"/><path d="M5.2 5.2 L10.8 10.8 M10.8 5.2 L5.2 10.8" stroke="#f2f2f2" stroke-width="1.9"/><circle cx="26" cy="8" r="6.6" fill="#4d4d4d"/><rect x="24.4" y="5.2" width="5" height="4" fill="none" stroke="#f2f2f2" stroke-width="1.1"/><rect x="22.6" y="7" width="5" height="4" fill="#4d4d4d" stroke="#f2f2f2" stroke-width="1.1"/></svg><span class="t" style="left:1283.00px;top:562.00px;font-size:13px;line-height:16px;color:#1a1a1a;letter-spacing:-0.436px;">Selection Filter</span><div class="a" style="left:1155px;top:579.5px;width:300px;height:2px;background:#d9d9d9"></div><div class="a" style="left:1167px;top:594px;width:276px;height:130px;background:#e5e5e5;border-top:1px solid #dcdcdc;border-radius:3px"></div><span class="t" style="left:1174.40px;top:584.60px;font-size:12px;line-height:14px;color:#1a1a1a;letter-spacing:-0.111px;">Filter</span><span class="t" style="left:1181.80px;top:617.60px;font-size:13px;line-height:16px;color:#111;letter-spacing:0.308px;">Entity type:</span><span class="t" style="left:1181.80px;top:644.20px;font-size:13px;line-height:16px;color:#111;letter-spacing:0.307px;">Property:</span><span class="t" style="left:1181.80px;top:670.20px;font-size:13px;line-height:16px;color:#111;letter-spacing:0.164px;">Comparison:</span><span class="t" style="left:1181.80px;top:692.80px;font-size:13px;line-height:16px;color:#111;letter-spacing:0.018px;">Value:</span><div class="a" style="left:1265.6px;top:614.2px;width:162px;height:21.6px;background:#fff;border-radius:6px;border:1px solid #c8d1db;box-shadow:0 0.5px 1px rgba(0,0,0,0.10)"></div><div class="a" style="left:1409px;top:617.2px;width:16px;height:16px;border-radius:4.5px;background:#0a7aff"></div><svg style="left:1409px;top:617.2px" width="16" height="16" viewBox="0 0 16 16"><path d="M5.2 6.4 L8 3.6 L10.8 6.4 M5.2 9.6 L8 12.4 L10.8 9.6" fill="none" stroke="#fff" stroke-width="1.5" stroke-linecap="round" stroke-linejoin="round"/></svg><div class="a" style="left:1265.6px;top:640.2px;width:162px;height:21.6px;background:#fff;border-radius:6px;border:1px solid #c8d1db;box-shadow:0 0.5px 1px rgba(0,0,0,0.10)"></div><div class="a" style="left:1409px;top:643.2px;width:16px;height:16px;border-radius:4.5px;background:#0a7aff"></div><svg style="left:1409px;top:643.2px" width="16" height="16" viewBox="0 0 16 16"><path d="M5.2 6.4 L8 3.6 L10.8 6.4 M5.2 9.6 L8 12.4 L10.8 9.6" fill="none" stroke="#fff" stroke-width="1.5" stroke-linecap="round" stroke-linejoin="round"/></svg><div class="a" style="left:1265.6px;top:666.2px;width:162px;height:21.6px;background:#fff;border-radius:6px;border:1px solid #c8d1db;box-shadow:0 0.5px 1px rgba(0,0,0,0.10)"></div><div class="a" style="left:1409px;top:669.2px;width:16px;height:16px;border-radius:4.5px;background:#0a7aff"></div><svg style="left:1409px;top:669.2px" width="16" height="16" viewBox="0 0 16 16"><path d="M5.2 6.4 L8 3.6 L10.8 6.4 M5.2 9.6 L8 12.4 L10.8 9.6" fill="none" stroke="#fff" stroke-width="1.5" stroke-linecap="round" stroke-linejoin="round"/></svg><span class="t" style="left:1270.00px;top:617.60px;font-size:13px;line-height:16px;color:#111;letter-spacing:0.165px;">Text</span><div class="a" style="left:1167px;top:739px;width:70px;height:26px;border:1px solid #b0b0b0;background:linear-gradient(#f7f7f7,#efefef 48%,#e6e6e6 52%,#ececec)"></div><div class="a" style="left:1236px;top:739px;width:70px;height:26px;border:1px solid #b0b0b0;background:linear-gradient(#f7f7f7,#efefef 48%,#e6e6e6 52%,#ececec)"></div><div class="a" style="left:1305px;top:739px;width:70px;height:26px;border:1px solid #b0b0b0;background:linear-gradient(#f7f7f7,#efefef 48%,#e6e6e6 52%,#ececec)"></div><div class="a" style="left:1374px;top:739px;width:69.4px;height:26px;border:1px solid #b0b0b0;background:linear-gradient(#f7f7f7,#efefef 48%,#e6e6e6 52%,#ececec)"></div><svg style="left:1167px;top:739px" width="280" height="26" viewBox="1167 739 280 26"><g stroke="#333" stroke-width="0.7" stroke-dasharray="1.2 1"><rect x="1194.4" y="745.4" width="12.4" height="12.4" fill="#fb8c8c"/><rect x="1263.4" y="745.2" width="9.6" height="9.6" fill="#fb8c8c"/><rect x="1266.8" y="748.6" width="9.6" height="9.6" fill="#fb8c8c" fill-opacity="0.85"/><rect x="1332.6" y="745.2" width="9.6" height="9.6" fill="#fb8c8c" stroke-dasharray="none" stroke="#a55"/><rect x="1336" y="748.6" width="9.6" height="9.6" fill="#fff"/><rect x="1401.4" y="745.2" width="9.6" height="9.6" fill="#fff" stroke-dasharray="none" stroke="#777"/><rect x="1404.8" y="748.6" width="9.6" height="9.6" fill="#fff"/><rect x="1404.8" y="748.6" width="6.2" height="6.2" fill="#f66" stroke="none"/></g></svg><div class="a" style="left:1307.4px;top:584.8px;width:79.6px;height:79.6px;border-radius:50%;background:radial-gradient(circle closest-side,rgba(255,255,255,0.42) 0,rgba(255,255,255,0.5) 70%,rgba(255,255,255,0.9) 82%,rgba(150,172,198,0.75) 90%,rgba(140,163,192,0.7) 97%,rgba(140,163,192,0) 100%)"></div><svg style="left:1346.4px;top:624px" width="18" height="30" viewBox="0 0 18 30"><path d="M1.2 1.2 L1.2 22.4 L6 17.8 L9.9 27 L13.5 25.4 L9.6 16.4 L16.2 16.2 Z" fill="#fff" stroke="#111" stroke-width="1.3" stroke-linejoin="round"/></svg><div class="a" style="left:1455px;top:123px;width:45px;height:676px;background:linear-gradient(90deg,#f8f8f8 0,#f0f0f0 3%,#eaeaea 14%,#dcdcdc 45%,#d3d3d3 72%,#cbcbcb 95%,#b9b9b9 96%)"></div><div class="hh" style="left:1463px;top:131px;width:26px"></div><div class="sel" style="left:1456px;top:135px;width:42.5px;height:43px;background:#b6b6b6;border-radius:5px"></div><div class="sel" style="left:1456px;top:330px;width:42.5px;height:43px;background:#b6b6b6;border-radius:5px"></div><div class="sel" style="left:1456px;top:433px;width:42.5px;height:43px;background:#b6b6b6;border-radius:5px"></div><div class="sh" style="left:1457px;top:276px;width:43px"></div><div class="sh" style="left:1457px;top:425.5px;width:43px"></div><div class="sh" style="left:1457px;top:528.5px;width:43px"></div><div class="a" style="left:1463px;top:142px;width:27.8px;height:28px;background:#fff;border:1px solid #4a4a4a;border-top:4.5px solid #000"></div><div class="a" style="left:1464px;top:142.6px;width:4px;height:3.6px;background:#fff"></div><div class="a" style="left:1463px;top:189px;width:27.8px;height:28px;background:#fff;border:1px solid #4a4a4a;border-top:4.5px solid #000"></div><div class="a" style="left:1464px;top:189.6px;width:4px;height:3.6px;background:#fff"></div><div class="a" style="left:1463px;top:235.5px;width:27.8px;height:28px;background:#fff;border:1px solid #4a4a4a;border-top:4.5px solid #000"></div><div class="a" style="left:1464px;top:236.1px;width:4px;height:3.6px;background:#fff"></div><div class="a" style="left:1463px;top:291px;width:27.8px;height:28px;background:#fff;border:1px solid #4a4a4a;border-top:4.5px solid #000"></div><div class="a" style="left:1464px;top:291.6px;width:4px;height:3.6px;background:#fff"></div><div class="a" style="left:1463px;top:337px;width:27.8px;height:28px;background:#fff;border:1px solid #4a4a4a;border-top:4.5px solid #000"></div><div class="a" style="left:1464px;top:337.6px;width:4px;height:3.6px;background:#fff"></div><div class="a" style="left:1463px;top:384px;width:27.8px;height:28px;background:#fff;border:1px solid #4a4a4a;border-top:4.5px solid #000"></div><div class="a" style="left:1464px;top:384.6px;width:4px;height:3.6px;background:#fff"></div><div class="a" style="left:1463px;top:440px;width:27.8px;height:28px;background:#fff;border:1px solid #4a4a4a;border-top:4.5px solid #000"></div><div class="a" style="left:1464px;top:440.6px;width:4px;height:3.6px;background:#fff"></div><div class="a" style="left:1463px;top:487px;width:27.8px;height:28px;background:#fff;border:1px solid #4a4a4a;border-top:4.5px solid #000"></div><div class="a" style="left:1464px;top:487.6px;width:4px;height:3.6px;background:#fff"></div><svg style="left:1455px;top:123px" width="45" height="460" viewBox="1455 123 45 460"><g fill="none"><path d="M1470.6 154.4 L1479.6 150.4 L1479.6 161.4 L1470.6 165.6 Z" fill="#9a9a9a" stroke="#555" stroke-width="0.7"/><path d="M1472.6 155.4 L1481.6 151.4 L1481.6 162.4 L1472.6 166.6 Z" fill="#c8c8c8" stroke="#555" stroke-width="0.7"/><path d="M1474.8 156.2 L1484.4 152 L1484.4 162.8 L1474.8 167.2 Z" fill="#fff" stroke="#555" stroke-width="0.7"/><path d="M1477.4 163.4 L1482 155.4 L1482 162 M1479 160.4 L1482 159.6" stroke="#e33" stroke-width="0.9"/><rect x="1470" y="200.6" width="10.6" height="7.8" fill="#f6f1d0" stroke="#999" stroke-width="0.8"/><circle cx="1479.6" cy="207.6" r="4.4" fill="#f3edc8" fill-opacity="0.85" stroke="#999" stroke-width="0.8"/><rect x="1468.6" y="245.6" width="17" height="10.6" rx="2.4" fill="#f2f2f2" stroke="#c3d3ec" stroke-width="1.1"/><rect x="1466.6" y="301.6" width="3.6" height="3.2" fill="#000"/><rect x="1473.4" y="301.6" width="13.6" height="3.2" fill="#fff" stroke="#666" stroke-width="0.7"/><rect x="1466.6" y="307.5" width="3.6" height="3.2" fill="#000"/><rect x="1473.4" y="307.5" width="13.6" height="3.2" fill="#fff" stroke="#666" stroke-width="0.7"/><rect x="1466.6" y="313.4" width="3.6" height="3.2" fill="#000"/><rect x="1473.4" y="313.4" width="13.6" height="3.2" fill="#fff" stroke="#666" stroke-width="0.7"/><defs><linearGradient id="gfun" x1="0" x2="1"><stop offset="0" stop-color="#8a8a8a"/><stop offset="0.5" stop-color="#d8d8d8"/><stop offset="1" stop-color="#7a7a7a"/></linearGradient></defs><g transform="translate(0,-1)"><path d="M1469.6 345.6 L1484.6 345.6 L1478.6 352.4 L1478.6 360.6 L1475.8 358.8 L1475.8 352.4 Z" fill="url(#gfun)" stroke="#666" stroke-width="0.6"/><ellipse cx="1477.1" cy="345.6" rx="7.5" ry="1.5" fill="#9a9a9a" stroke="#666" stroke-width="0.5"/></g><g transform="translate(0,-1)"><path d="M1467 402 L1489 402" stroke="#f5a0a0" stroke-width="0.8" stroke-dasharray="2 1"/><path d="M1469.4 395 L1473.4 397.2 L1473.4 406.8 L1469.4 409 Z" fill="#eee" stroke="#444" stroke-width="0.8"/><rect x="1473.4" y="398" width="5" height="8" fill="#ddd" stroke="#444" stroke-width="0.7"/><rect x="1478.4" y="398.4" width="7.4" height="7.2" fill="#6a6a6a" stroke="#444" stroke-width="0.7"/></g><path d="M1466.6 448.6 L1479 448.6" stroke="#777" stroke-width="0.9" stroke-dasharray="3 0.7 2 0.6"/><path d="M1466.6 452 L1481.5 452" stroke="#777" stroke-width="0.9" stroke-dasharray="3 0.7 2 0.6"/><path d="M1466.6 455.4 L1479 455.4" stroke="#777" stroke-width="0.9" stroke-dasharray="3 0.7 2 0.6"/><path d="M1466.6 458.8 L1481.5 458.8" stroke="#777" stroke-width="0.9" stroke-dasharray="3 0.7 2 0.6"/><path d="M1464 461.6 L1491 461.6" stroke="#222" stroke-width="0.8"/><path d="M1466.4 465 L1468 465 M1473 465 L1488.6 465" stroke="#222" stroke-width="1.3"/><rect x="1470.6" y="498.2" width="13.2" height="14" rx="0.8" fill="#c98a35" stroke="#9a6422" stroke-width="0.6"/><rect x="1472.2" y="499.8" width="10" height="11" fill="#f4f4f0"/><rect x="1474.6" y="496.8" width="5.4" height="2.8" fill="#8e8e84"/><path d="M1473.6 503 L1480.8 503 M1473.6 505.4 L1480.8 505.4 M1473.6 507.8 L1479 507.8" stroke="#bbb" stroke-width="0.7"/></g><text x="1463.4" y="566" font-family="Liberation Sans, sans-serif" font-size="24" textLength="27.5" lengthAdjust="spacingAndGlyphs" fill="#111" stroke="#dcdcdc" stroke-width="0.5">3D</text></svg>
<div class="a" style="left:0;top:799px;width:1500px;height:45px;background:#dcdcdc"></div><span class="t" style="left:2.00px;top:806.40px;font-size:10px;line-height:12px;color:#111;letter-spacing:-0.100px;">398.3467,118.1411</span><span class="t" style="left:2.00px;top:826.60px;font-size:10px;line-height:12px;color:#111;letter-spacing:-0.159px;">@398.3467,118.1411</span><div class="a" style="left:253px;top:802px;width:1px;height:40px;background:#666"></div><span class="t" style="left:256.50px;top:806.40px;font-size:10px;line-height:12px;color:#111;letter-spacing:0.111px;">415.4966&lt;17°</span><span class="t" style="left:256.50px;top:826.60px;font-size:10px;line-height:12px;color:#111;letter-spacing:-0.024px;">@415.4966&lt;17°</span><span class="t" style="left:597.60px;top:817.00px;font-size:9.7px;line-height:12px;color:#111;letter-spacing:0.313px;">Select entity or region</span><span class="t" style="left:949.00px;top:817.00px;font-size:9.7px;line-height:12px;color:#111;letter-spacing:0.293px;">No entities selected.</span><div class="a" style="left:506.5px;top:819px;width:6px;height:6px;border-radius:3px;background:#c4c4c4"></div><div class="a" style="left:940px;top:819px;width:6px;height:6px;border-radius:3px;background:#c4c4c4"></div><div class="a" style="left:1269.5px;top:819px;width:6px;height:6px;border-radius:3px;background:#c4c4c4"></div><svg style="left:716px;top:806px" width="20" height="32" viewBox="0 0 20 32"><rect x="1.8" y="1.4" width="16.4" height="27.6" rx="8" fill="#f6f6f6" stroke="#333" stroke-width="1"/><path d="M1.8 13.6 Q10 16 18.2 13.6 M10 1.4 L10 14.8" stroke="#333" stroke-width="0.9" fill="none"/><rect x="8.6" y="3.4" width="2.8" height="6.4" rx="1.4" fill="#fff" stroke="#333" stroke-width="0.7"/></svg>
</div></body></html>
